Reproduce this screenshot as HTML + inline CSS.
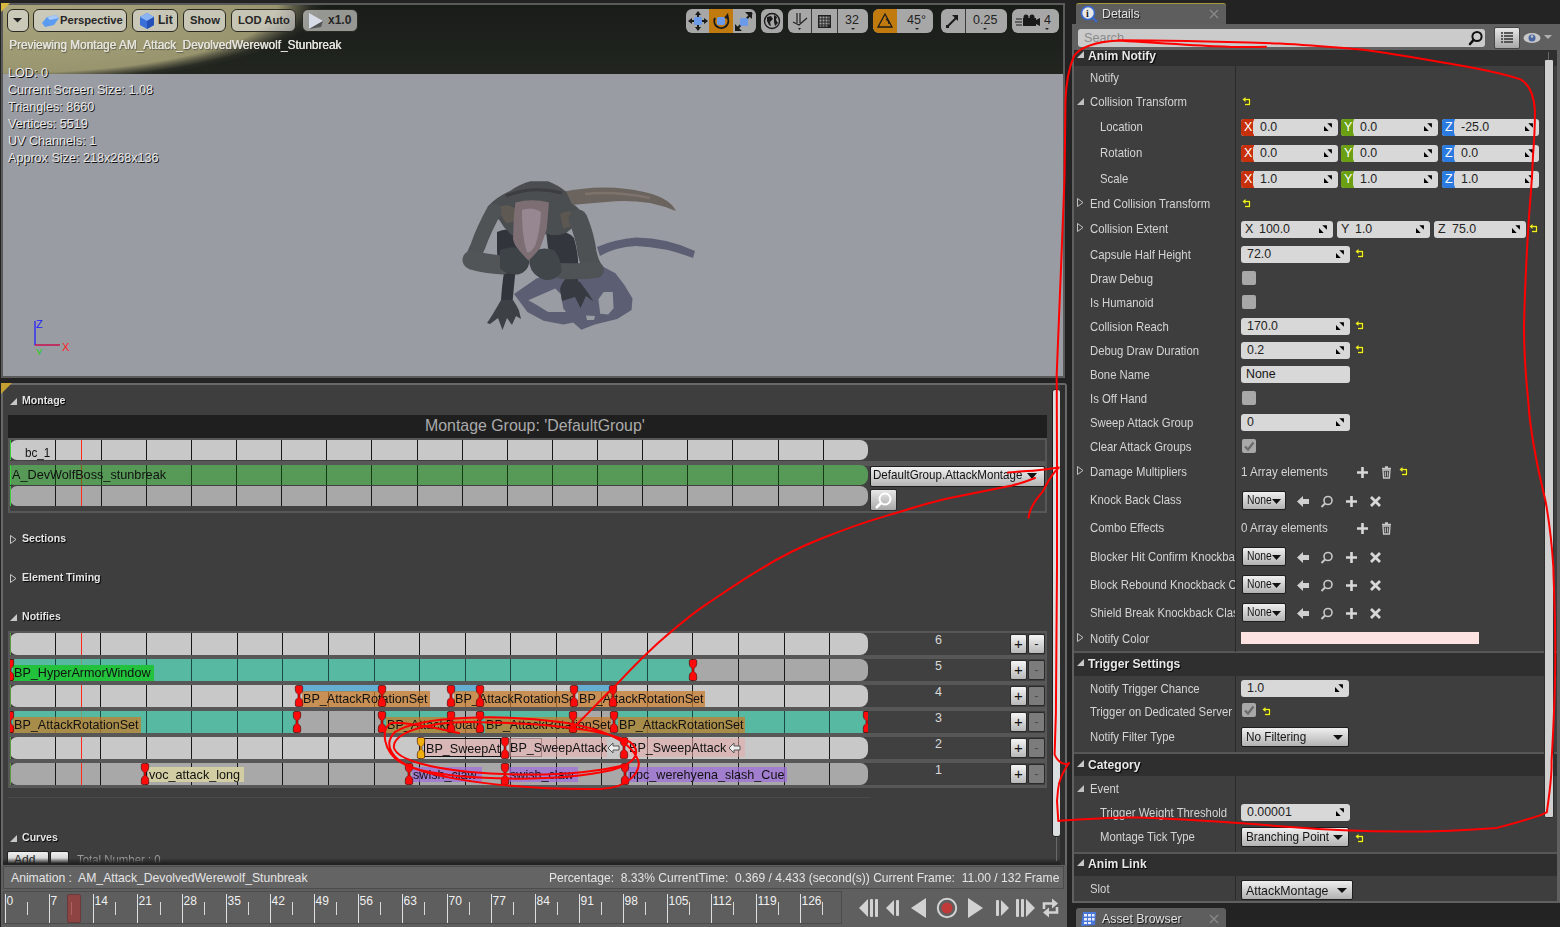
<!DOCTYPE html>
<html><head><meta charset="utf-8">
<style>
*{box-sizing:border-box;margin:0;padding:0}
html,body{width:1560px;height:927px;overflow:hidden;background:#232323;font-family:"Liberation Sans",sans-serif;position:relative}
.a{position:absolute}
/* viewport */
#vp{left:1px;top:3px;width:1064px;height:375px;background:#5a5a5a}
#vpin{left:2px;top:2px;width:1060px;height:371px;background:#9a9ca3;overflow:hidden}
#sky{left:0;top:0;width:1060px;height:69px;background:radial-gradient(ellipse 330px 82px at 0px 0px,#a8a47e 0%,#9c9872 70%,#98946e 83%,#5c5b47 88%,#2a2d25 93%,rgba(29,33,28,0) 97%),linear-gradient(#191c18,#1e221d 60%,#22261f)}
.tb{position:absolute;top:6px;height:23px;border:1px solid #2a2a22;border-radius:6px;background:rgba(226,226,222,.62);font-weight:bold;font-size:12px;color:#262626;line-height:21px;white-space:nowrap}
.ovt{position:absolute;color:#e8e8e8;font-size:12px;text-shadow:1px 1px 0 #111;white-space:nowrap}
/* montage panel */
#mp{left:1px;top:383px;width:1066px;height:483px;background:#5a5a5a}
#mpin{left:2px;top:2px;width:1062px;height:481px;background:#3e3e3e;overflow:hidden}
.sec{position:absolute;color:#e0e0e0;font-size:11.5px;font-weight:bold;text-shadow:1px 1px 0 #111;white-space:nowrap}
/* details */
#dt{left:1072px;top:24px;width:488px;height:878px;background:#5c5c5c}
</style></head><body>
<div class="a" id="vp"><div class="a" id="vpin">
  <div class="a" id="sky"></div>
  <!-- toolbar left (coords relative to vpin: x-3, y-5) -->
  <div class="tb" style="left:4px;top:4px;width:22px"><svg width="20" height="21" style="position:absolute;left:0;top:0"><path d="M5 8 L14 8 L9.5 12.5 Z" fill="#222"/></svg></div>
  <div class="tb" style="left:30px;top:4px;width:94px"><svg width="20" height="16" style="position:absolute;left:7px;top:3px"><path d="M1 10 L6 4 L15 2 L18 5 L13 12 L4 14 Z" fill="#5b9cf0"/><path d="M6 4 L15 2 L18 5 L9 7 Z" fill="#a8c8f8"/></svg><span style="position:absolute;left:26px;top:0;font-size:11.2px">Perspective</span></div>
  <div class="tb" style="left:129px;top:4px;width:46px"><svg width="18" height="18" style="position:absolute;left:5px;top:2px"><path d="M2 5 L9 1 L16 5 L16 13 L9 17 L2 13 Z" fill="#3a6ed8"/><path d="M2 5 L9 1 L16 5 L9 9 Z" fill="#8ab4f4"/><path d="M9 9 L16 5 L16 13 L9 17 Z" fill="#2550b8"/></svg><span style="position:absolute;left:25px;top:0;font-size:12px">Lit</span></div>
  <div class="tb" style="left:180px;top:4px;width:43px"><span style="position:absolute;left:6px;top:0;font-size:11.2px">Show</span></div>
  <div class="tb" style="left:228px;top:4px;width:65px"><span style="position:absolute;left:6px;top:0;font-size:11.2px">LOD Auto</span></div>
  <div class="tb" style="left:299px;top:4px;width:56px"><svg width="18" height="18" style="position:absolute;left:4px;top:2px"><path d="M2 1 L16 9 L2 17 Z" fill="#d8dce8"/><path d="M2 17 L16 9 L14 15 Z" fill="#555"/></svg><span style="position:absolute;left:25px;top:0;font-size:12px">x1.0</span></div>
  <div class="ovt" style="left:6px;top:33px;font-size:12.2px;color:#e4e4dc;text-shadow:0.4px 0 0 #e4e4dc,1px 1px 1px rgba(40,40,40,.6);transform:scaleX(.97);transform-origin:0 0">Previewing Montage AM_Attack_DevolvedWerewolf_Stunbreak</div>
  <div class="ovt" style="left:5px;top:60px;font-size:12.6px;line-height:17px">LOD: 0<br>Current Screen Size: 1.08<br>Triangles: 8660<br>Vertices: 5519<br>UV Channels: 1<br>Approx Size: 218x268x136</div>
  <div class="a" style="left:683px;top:4px;width:70px;height:24px;border-radius:6px;background:#a7a7a7;overflow:hidden">
    <div class="a" style="left:23px;top:0;width:24px;height:24px;background:#c07a0e"></div>
    <svg class="a" style="left:0;top:0" width="70" height="24"><g fill="#1a1a1a"><path d="M12 2 L15 6 L9 6 Z M12 22 L15 18 L9 18 Z M2 12 L6 9 L6 15 Z M22 12 L18 9 L18 15 Z"/><rect x="11" y="5" width="2" height="14"/><rect x="5" y="11" width="14" height="2"/></g><rect x="8" y="8" width="8" height="8" rx="1.5" fill="#6a9ae8"/><path d="M29 9 A7 7 0 1 0 41 8" stroke="#1a1a1a" stroke-width="2" fill="none"/><path d="M42 4 L43 10 L38 9 Z" fill="#1a1a1a"/><rect x="31" y="8" width="8" height="8" rx="1.5" fill="#6a9ae8"/><path d="M50 21 L66 4" stroke="#1a1a1a" stroke-width="2"/><path d="M66 3 L66 10 L59 3 Z M49 22 L49 15 L56 22 Z" fill="#1a1a1a"/><rect x="54" y="9" width="8" height="8" rx="1.5" fill="#6a9ae8"/></svg>
  </div>
  <div class="a" style="left:758px;top:4px;width:22px;height:24px;border-radius:6px;background:#a7a7a7"><svg width="22" height="24"><circle cx="11" cy="12" r="7.5" stroke="#1a1a1a" stroke-width="1.4" fill="none"/><path d="M6 8 L10 7 L12 10 L9 13 L10 17 L8 16 L6 12 Z M13 6 L16 8 L15 11 L17 14 L14 17 L13 13 Z" fill="#1a1a1a"/></svg></div>
  <div class="a" style="left:785px;top:4px;width:80px;height:24px;border-radius:6px;background:#a7a7a7;overflow:hidden">
    <div class="a" style="left:23px;top:0;width:1px;height:24px;background:#3a3a3a"></div><div class="a" style="left:49px;top:0;width:1px;height:24px;background:#3a3a3a"></div>
    <svg class="a" style="left:0;top:0" width="80" height="24"><path d="M5 13 L11 16 L19 9 M9 4 L9 14 M12 4 L12 14" stroke="#222" stroke-width="1.2" fill="none"/><path d="M10 19 L13 19 L11.5 21 Z" fill="#222"/><g fill="#222"><rect x="30" y="6" width="13" height="13"/></g><g fill="#a7a7a7"><rect x="31.5" y="7.5" width="2" height="2"/><rect x="34.5" y="7.5" width="2" height="2"/><rect x="37.5" y="7.5" width="2" height="2"/><rect x="40.5" y="7.5" width="1" height="2"/><rect x="31.5" y="10.5" width="2" height="2"/><rect x="34.5" y="10.5" width="2" height="2"/><rect x="37.5" y="10.5" width="2" height="2"/><rect x="31.5" y="13.5" width="2" height="2"/><rect x="34.5" y="13.5" width="2" height="2"/><rect x="37.5" y="13.5" width="2" height="2"/><rect x="40.5" y="10.5" width="1" height="2"/><rect x="40.5" y="13.5" width="1" height="2"/><rect x="31.5" y="16.5" width="2" height="1"/><rect x="34.5" y="16.5" width="2" height="1"/><rect x="37.5" y="16.5" width="2" height="1"/></g><text x="57" y="15" font-size="12.5" font-family="Liberation Sans" fill="#222">32</text><path d="M63 19 L67 19 L65 21 Z" fill="#222"/></svg>
  </div>
  <div class="a" style="left:870px;top:4px;width:60px;height:24px;border-radius:6px;background:#a7a7a7;overflow:hidden">
    <div class="a" style="left:0;top:0;width:24px;height:24px;background:#c07a0e"></div>
    <svg class="a" style="left:0;top:0" width="60" height="24"><path d="M5 18 L12 5 L19 18 Z" stroke="#1a1a1a" stroke-width="1.3" fill="none"/><path d="M13 10 A6 6 0 0 1 16 15" stroke="#1a1a1a" stroke-width="1.2" fill="none"/><text x="34" y="15" font-size="12.5" font-family="Liberation Sans" fill="#222">45°</text><path d="M42 19 L46 19 L44 21 Z" fill="#222"/></svg>
  </div>
  <div class="a" style="left:938px;top:4px;width:66px;height:24px;border-radius:6px;background:#a7a7a7;overflow:hidden">
    <div class="a" style="left:24px;top:0;width:1px;height:24px;background:#3a3a3a"></div>
    <svg class="a" style="left:0;top:0" width="66" height="24"><path d="M7 17 L16 8" stroke="#1a1a1a" stroke-width="2"/><path d="M17 6 L17 12 L11 6 Z" fill="#1a1a1a"/><rect x="5" y="16" width="3" height="3" fill="#1a1a1a"/><text x="32" y="15" font-size="12.5" font-family="Liberation Sans" fill="#222">0.25</text><path d="M42 19 L46 19 L44 21 Z" fill="#222"/></svg>
  </div>
  <div class="a" style="left:1009px;top:4px;width:47px;height:24px;border-radius:6px;background:#a7a7a7"><svg width="47" height="24"><path d="M11 9 L24 9 L24 17 L11 17 Z M24 11 L28 9 L28 17 L24 15 Z" fill="#1a1a1a"/><path d="M4 10 L10 10 M3 13 L10 13 M4 16 L10 16" stroke="#1a1a1a" stroke-width="1"/><circle cx="14" cy="8" r="2.5" fill="#1a1a1a"/><circle cx="20" cy="8" r="2.5" fill="#1a1a1a"/><text x="32" y="15" font-size="12.5" font-family="Liberation Sans" fill="#222">4</text><path d="M33 19 L37 19 L35 21 Z" fill="#222"/></svg></div>
  <svg class="a" style="left:-3px;top:-5px" width="1060" height="371" viewBox="0 0 1060 371">
  <defs><filter id="bl" x="-5%" y="-5%" width="110%" height="110%"><feGaussianBlur stdDeviation="0.7"/></filter></defs>
  <g fill="#5b5f73" filter="url(#bl)">
    <path d="M597 247 Q615 239 636 237.5 Q668 238 695 251 L693 258 Q665 247 636 246 Q615 247 600 256 Z"/>
    <path fill-rule="evenodd" d="M514 294 L536.4 278.6 Q570 270 603.7 267 L615.4 273.3 L624.4 285 L632.5 298.4 L631.6 310 L617.2 319 L594.8 324.4 L581.3 329.8 L573.2 322.6 L563.3 324.4 L543.6 320.8 L527.4 311.9 Z M528.3 300.2 L555.3 288.5 L560.7 293.9 L563.3 308.3 L566 311.9 L548.1 311.9 L536.4 304.7 Z M598.4 299.3 L603.7 292.1 L612.7 292.1 L613.6 308.3 L608.2 314.6 L600.2 313.7 Z M586 315.5 L595 316 L594 320 L587 320 Z"/>
  </g>
  <!-- tail -->
  <path d="M562 192 Q590 186 615 187.8 Q645 190 662 198 Q672 203 676 211 Q664 206 650 203 Q630 200 615 201.3 Q595 203 571.5 205 Z" fill="#6b635d"/>
  <path d="M585 194 Q615 191 650 198" stroke="#857b73" stroke-width="2.5" fill="none" opacity=".7"/>
  <!-- thighs / legs -->
  <path d="M497 232 Q508 226 520 234 L521 262 Q516 270 515 276 L512.7 300 L501 300 Q502 285 503.7 274 Q497 262 497 250 Z" fill="#31353b"/>
  <path d="M546 231 Q565 228 574 238 Q579 255 578 270 L578 282 Q570 281 566.5 278 Q555 262 548 248 Z" fill="#33373d"/>
  <path d="M487 323 Q492 316 501 300 L513 300 Q517 306 519 310.5 L521 319 L516 316 L512 325 L507 318 L502.5 330 L498 318 L490 324 Z" fill="#3d4145"/>
  <path d="M560 288.7 Q562 282 566.5 278 L580 282 Q588 292 593.5 301.5 L586 296 L580.5 308 L575 297 L562 301 Z" fill="#373b41"/>
  <!-- torso -->
  <path d="M487.4 207 Q496 197 510 191 Q520 184 530.5 181.3 L547.8 181.3 Q558 185 566 191.6 Q569 198 571.5 203.4 Q579 207 583.4 215.3 Q576 226 566 233 Q556 237 547.8 234 L514 237 Q504 229 500 221 Q494 214 487.4 207 Z" fill="#4b4e51"/>
  <path d="M506 196 Q532 185 562 193" stroke="#3b3d41" stroke-width="3" fill="none"/>
  <path d="M497 208 Q510 201 518 212 Q516 224 506 223 Z" fill="#5f5953"/>
  <path d="M560 214 Q572 208 580 217 Q573 229 563 228 Z" fill="#5d5751"/>
  <!-- arms -->
  <path d="M494 211 Q484 229 478 246 Q474 254 473 259" stroke="#4f5355" stroke-width="15" fill="none" stroke-linecap="round"/>
  <path d="M472 260 Q486 264 503 265" stroke="#515557" stroke-width="19" fill="none" stroke-linecap="round"/>
  <path d="M578 219 Q585 236 587 252 Q589 262 592 267" stroke="#4d5153" stroke-width="19" fill="none" stroke-linecap="round"/>
  <path d="M596 270 Q582 272 562 271" stroke="#4f5355" stroke-width="16" fill="none" stroke-linecap="round"/>
  <!-- hands -->
  <path d="M500 250 Q510 246 522 248 Q530 252 529.4 262 Q528 272 518 274.6 Q505 275 500 268 Z" fill="#3e4347"/>
  <path d="M530 252 Q542 246 554 250 Q562 260 561.4 272 Q556 281 545 280 Q532 276 529.4 264 Z" fill="#41464b"/>
  <!-- snout -->
  <path d="M515.4 202.4 Q532 198 548.9 202.4 Q548 215 546.7 229.3 Q544 238 540.2 247.7 Q534 256 528.4 260.6 Q520 252 515.4 245.5 Q512 238 513.3 236.9 Q513 218 515.4 202.4 Z" fill="#7d6e74"/>
  <path d="M522 210 Q532 206 541 212 Q540 232 535 246 Q530 254 527 252 Q522 238 522 210 Z" fill="#968790"/>
</svg>
  <!-- axis -->
  <svg class="a" style="left:25px;top:310px" width="50" height="40"><path d="M7 6 L7 30 L32 30" stroke="#1a1aff" stroke-width="1.2" fill="none"/><path d="M7 30 L32 30" stroke="#ff1a1a" stroke-width="1.2"/><text x="8" y="13" fill="#2222ff" font-size="11" font-family="Liberation Sans">Z</text><text x="34" y="36" fill="#ff2020" font-size="11" font-family="Liberation Sans">X</text><text x="8" y="42" fill="#22cc22" font-size="10" font-family="Liberation Sans">Y</text></svg>
</div></div>

<div class="a" style="left:1px;top:383px;width:1066px;height:482px;background:#686868;border-radius:3px 3px 0 0"></div>
<div class="a" style="left:3px;top:385px;width:1062px;height:480px;background:#3e3e3e"></div>
<svg class="a" style="left:1px;top:383px" width="12" height="12"><path d="M0 0 L11 0 L0 11 Z" fill="#c4a032"/></svg>
<svg class="a" style="left:1px;top:3px" width="12" height="12"><path d="M0 0 L9 0 L0 9 Z" fill="#d8b840"/></svg>
<svg class="a" style="left:9px;top:397px" width="10" height="10"><path d="M1 8 L8 8 L8 1 Z" fill="#c8c8c8"/></svg><div class="a" style="left:22px;top:394px;white-space:nowrap;font-size:11.5px;font-weight:bold;color:#e4e4e4;text-shadow:1px 1px 1px #000;transform:scaleX(.92);transform-origin:0 0">Montage</div>
<svg class="a" style="left:9px;top:534px" width="10" height="12"><path d="M1.5 1.5 L7 5.5 L1.5 9.5 Z" stroke="#c8c8c8" stroke-width="1" fill="none"/></svg><div class="a" style="left:22px;top:532px;white-space:nowrap;font-size:11.5px;font-weight:bold;color:#e4e4e4;text-shadow:1px 1px 1px #000;transform:scaleX(.92);transform-origin:0 0">Sections</div>
<svg class="a" style="left:9px;top:573px" width="10" height="12"><path d="M1.5 1.5 L7 5.5 L1.5 9.5 Z" stroke="#c8c8c8" stroke-width="1" fill="none"/></svg><div class="a" style="left:22px;top:571px;white-space:nowrap;font-size:11.5px;font-weight:bold;color:#e4e4e4;text-shadow:1px 1px 1px #000;transform:scaleX(.92);transform-origin:0 0">Element Timing</div>
<svg class="a" style="left:9px;top:613px" width="10" height="10"><path d="M1 8 L8 8 L8 1 Z" fill="#c8c8c8"/></svg><div class="a" style="left:22px;top:610px;white-space:nowrap;font-size:11.5px;font-weight:bold;color:#e4e4e4;text-shadow:1px 1px 1px #000;transform:scaleX(.92);transform-origin:0 0">Notifies</div>
<svg class="a" style="left:9px;top:834px" width="10" height="10"><path d="M1 8 L8 8 L8 1 Z" fill="#c8c8c8"/></svg><div class="a" style="left:22px;top:831px;white-space:nowrap;font-size:11.5px;font-weight:bold;color:#e4e4e4;text-shadow:1px 1px 1px #000;transform:scaleX(.92);transform-origin:0 0">Curves</div>
<div class="a" style="left:8px;top:415px;width:1039px;height:23px;background:#1f1f1f"></div>
<div class="a" style="left:425px;top:416px;white-space:nowrap;font-size:15.9px;color:#ababab;line-height:20px">Montage Group: 'DefaultGroup'</div>
<div class="a" style="left:8px;top:438px;width:1039px;height:75px;background:#575757"></div>
<div class="a" style="left:10px;top:440px;width:1035px;height:21px;background:#404040"></div>
<div class="a" style="left:10px;top:466px;width:1035px;height:45px;background:#404040"></div>
<div class="a" style="left:10px;top:440px;width:858px;height:20px;background:#c8c8c8;border-radius:7px 8px 8px 7px"></div><div class="a" style="left:55.0px;top:440px;width:1px;height:20px;background:#181818"></div><div class="a" style="left:101.0px;top:440px;width:1px;height:20px;background:#181818"></div><div class="a" style="left:146.0px;top:440px;width:1px;height:20px;background:#181818"></div><div class="a" style="left:191.0px;top:440px;width:1px;height:20px;background:#181818"></div><div class="a" style="left:236.0px;top:440px;width:1px;height:20px;background:#181818"></div><div class="a" style="left:281.0px;top:440px;width:1px;height:20px;background:#181818"></div><div class="a" style="left:326.0px;top:440px;width:1px;height:20px;background:#181818"></div><div class="a" style="left:371.0px;top:440px;width:1px;height:20px;background:#181818"></div><div class="a" style="left:417.0px;top:440px;width:1px;height:20px;background:#181818"></div><div class="a" style="left:462.0px;top:440px;width:1px;height:20px;background:#181818"></div><div class="a" style="left:507.0px;top:440px;width:1px;height:20px;background:#181818"></div><div class="a" style="left:552.0px;top:440px;width:1px;height:20px;background:#181818"></div><div class="a" style="left:597.0px;top:440px;width:1px;height:20px;background:#181818"></div><div class="a" style="left:642.0px;top:440px;width:1px;height:20px;background:#181818"></div><div class="a" style="left:687.0px;top:440px;width:1px;height:20px;background:#181818"></div><div class="a" style="left:732.0px;top:440px;width:1px;height:20px;background:#181818"></div><div class="a" style="left:778.0px;top:440px;width:1px;height:20px;background:#181818"></div><div class="a" style="left:823.0px;top:440px;width:1px;height:20px;background:#181818"></div><div class="a" style="left:81px;top:440px;width:1.3px;height:20px;background:#ff2a1a"></div>
<div class="a" style="left:10px;top:465px;width:858px;height:20px;background:#579957;border-radius:4px 8px 8px 4px"></div><div class="a" style="left:55.0px;top:465px;width:1px;height:20px;background:#143a14"></div><div class="a" style="left:101.0px;top:465px;width:1px;height:20px;background:#143a14"></div><div class="a" style="left:146.0px;top:465px;width:1px;height:20px;background:#143a14"></div><div class="a" style="left:191.0px;top:465px;width:1px;height:20px;background:#143a14"></div><div class="a" style="left:236.0px;top:465px;width:1px;height:20px;background:#143a14"></div><div class="a" style="left:281.0px;top:465px;width:1px;height:20px;background:#143a14"></div><div class="a" style="left:326.0px;top:465px;width:1px;height:20px;background:#143a14"></div><div class="a" style="left:371.0px;top:465px;width:1px;height:20px;background:#143a14"></div><div class="a" style="left:417.0px;top:465px;width:1px;height:20px;background:#143a14"></div><div class="a" style="left:462.0px;top:465px;width:1px;height:20px;background:#143a14"></div><div class="a" style="left:507.0px;top:465px;width:1px;height:20px;background:#143a14"></div><div class="a" style="left:552.0px;top:465px;width:1px;height:20px;background:#143a14"></div><div class="a" style="left:597.0px;top:465px;width:1px;height:20px;background:#143a14"></div><div class="a" style="left:642.0px;top:465px;width:1px;height:20px;background:#143a14"></div><div class="a" style="left:687.0px;top:465px;width:1px;height:20px;background:#143a14"></div><div class="a" style="left:732.0px;top:465px;width:1px;height:20px;background:#143a14"></div><div class="a" style="left:778.0px;top:465px;width:1px;height:20px;background:#143a14"></div><div class="a" style="left:823.0px;top:465px;width:1px;height:20px;background:#143a14"></div><div class="a" style="left:81px;top:465px;width:1.3px;height:20px;background:#8a5a1a"></div>
<div class="a" style="left:10px;top:486px;width:858px;height:20px;background:#a8a8a8;border-radius:7px 8px 8px 7px"></div><div class="a" style="left:55.0px;top:486px;width:1px;height:20px;background:#181818"></div><div class="a" style="left:101.0px;top:486px;width:1px;height:20px;background:#181818"></div><div class="a" style="left:146.0px;top:486px;width:1px;height:20px;background:#181818"></div><div class="a" style="left:191.0px;top:486px;width:1px;height:20px;background:#181818"></div><div class="a" style="left:236.0px;top:486px;width:1px;height:20px;background:#181818"></div><div class="a" style="left:281.0px;top:486px;width:1px;height:20px;background:#181818"></div><div class="a" style="left:326.0px;top:486px;width:1px;height:20px;background:#181818"></div><div class="a" style="left:371.0px;top:486px;width:1px;height:20px;background:#181818"></div><div class="a" style="left:417.0px;top:486px;width:1px;height:20px;background:#181818"></div><div class="a" style="left:462.0px;top:486px;width:1px;height:20px;background:#181818"></div><div class="a" style="left:507.0px;top:486px;width:1px;height:20px;background:#181818"></div><div class="a" style="left:552.0px;top:486px;width:1px;height:20px;background:#181818"></div><div class="a" style="left:597.0px;top:486px;width:1px;height:20px;background:#181818"></div><div class="a" style="left:642.0px;top:486px;width:1px;height:20px;background:#181818"></div><div class="a" style="left:687.0px;top:486px;width:1px;height:20px;background:#181818"></div><div class="a" style="left:732.0px;top:486px;width:1px;height:20px;background:#181818"></div><div class="a" style="left:778.0px;top:486px;width:1px;height:20px;background:#181818"></div><div class="a" style="left:823.0px;top:486px;width:1px;height:20px;background:#181818"></div><div class="a" style="left:81px;top:486px;width:1.3px;height:20px;background:#ff2a1a"></div>
<div class="a" style="left:10px;top:440px;width:1.2px;height:20px;background:#3ad23a"></div>
<div class="a" style="left:10px;top:465px;width:1.2px;height:20px;background:#3ad23a"></div>
<div class="a" style="left:10px;top:486px;width:1.2px;height:20px;background:#3ad23a"></div>
<div class="a" style="left:25px;top:445px;white-space:nowrap;font-size:13px;color:#111;line-height:15px;transform:scaleX(.9);transform-origin:0 0">bc_1</div>
<div class="a" style="left:12px;top:467px;white-space:nowrap;font-size:13px;color:#111;line-height:15px;transform:scaleX(.975);transform-origin:0 0">A_DevWolfBoss_stunbreak</div>
<div class="a" style="left:870px;top:466px;width:175px;height:21px;background:linear-gradient(#f2f2f2,#b4b4b4);border:1px solid #1e1e1e;border-radius:2px"></div>
<div class="a" style="left:873px;top:468px;white-space:nowrap;font-size:12.6px;color:#111;line-height:15px;transform:scaleX(.92);transform-origin:0 0;width:165px;overflow:hidden">DefaultGroup.AttackMontage</div>
<svg class="a" style="left:1025px;top:471px" width="14" height="10"><path d="M2 2 L12 2 L7 8 Z" fill="#111"/></svg>
<div class="a" style="left:870px;top:489px;width:27px;height:22px;background:linear-gradient(#e8e8e8,#a8a8a8);border:1px solid #2a2a2a;border-radius:2px"><svg width="25" height="20"><circle cx="14" cy="9" r="5.5" stroke="#fff" stroke-width="2" fill="none"/><path d="M10 13 L5 18" stroke="#fff" stroke-width="2.5"/></svg></div>
<div class="a" style="left:8px;top:631px;width:1039px;height:157px;background:#575757"></div>
<div class="a" style="left:10px;top:633px;width:1035px;height:22px;background:#404040"></div>
<div class="a" style="left:10px;top:633px;width:858px;height:22px;background:#c8c8c8;border-radius:7px 8px 8px 7px"></div><div class="a" style="left:55.0px;top:633px;width:1px;height:22px;background:#181818"></div><div class="a" style="left:100.0px;top:633px;width:1px;height:22px;background:#181818"></div><div class="a" style="left:146.0px;top:633px;width:1px;height:22px;background:#181818"></div><div class="a" style="left:191.0px;top:633px;width:1px;height:22px;background:#181818"></div><div class="a" style="left:237.0px;top:633px;width:1px;height:22px;background:#181818"></div><div class="a" style="left:282.0px;top:633px;width:1px;height:22px;background:#181818"></div><div class="a" style="left:328.0px;top:633px;width:1px;height:22px;background:#181818"></div><div class="a" style="left:374.0px;top:633px;width:1px;height:22px;background:#181818"></div><div class="a" style="left:419.0px;top:633px;width:1px;height:22px;background:#181818"></div><div class="a" style="left:465.0px;top:633px;width:1px;height:22px;background:#181818"></div><div class="a" style="left:510.0px;top:633px;width:1px;height:22px;background:#181818"></div><div class="a" style="left:556.0px;top:633px;width:1px;height:22px;background:#181818"></div><div class="a" style="left:601.0px;top:633px;width:1px;height:22px;background:#181818"></div><div class="a" style="left:647.0px;top:633px;width:1px;height:22px;background:#181818"></div><div class="a" style="left:692.0px;top:633px;width:1px;height:22px;background:#181818"></div><div class="a" style="left:738.0px;top:633px;width:1px;height:22px;background:#181818"></div><div class="a" style="left:784.0px;top:633px;width:1px;height:22px;background:#181818"></div><div class="a" style="left:829.0px;top:633px;width:1px;height:22px;background:#181818"></div><div class="a" style="left:81px;top:633px;width:1.3px;height:22px;background:#ff2a1a"></div>
<div class="a" style="left:10px;top:633px;width:1.2px;height:22px;background:#5a9a3a"></div>
<div class="a" style="left:935px;top:633px;white-space:nowrap;font-size:12.5px;color:#d8d8d8;line-height:14px">6</div>
<div class="a" style="left:1010px;top:634px;width:17px;height:20px;background:linear-gradient(#f4f4f4,#b8b8b8);border:1px solid #2a2a2a;border-radius:2px"><div style="position:absolute;left:0;top:0;width:15px;text-align:center;font-size:15px;line-height:17px;color:#111">+</div></div>
<div class="a" style="left:1028px;top:634px;width:17px;height:20px;background:linear-gradient(#f4f4f4,#b8b8b8);border:1px solid #2a2a2a;border-radius:2px"><div style="position:absolute;left:0;top:0;width:15px;text-align:center;font-size:13px;line-height:17px;color:#222">-</div></div>
<div class="a" style="left:10px;top:659px;width:1035px;height:22px;background:#404040"></div>
<div class="a" style="left:10px;top:659px;width:858px;height:22px;background:#a8a8a8;border-radius:7px 8px 8px 7px"></div><div class="a" style="left:55.0px;top:659px;width:1px;height:22px;background:#181818"></div><div class="a" style="left:100.0px;top:659px;width:1px;height:22px;background:#181818"></div><div class="a" style="left:146.0px;top:659px;width:1px;height:22px;background:#181818"></div><div class="a" style="left:191.0px;top:659px;width:1px;height:22px;background:#181818"></div><div class="a" style="left:237.0px;top:659px;width:1px;height:22px;background:#181818"></div><div class="a" style="left:282.0px;top:659px;width:1px;height:22px;background:#181818"></div><div class="a" style="left:328.0px;top:659px;width:1px;height:22px;background:#181818"></div><div class="a" style="left:374.0px;top:659px;width:1px;height:22px;background:#181818"></div><div class="a" style="left:419.0px;top:659px;width:1px;height:22px;background:#181818"></div><div class="a" style="left:465.0px;top:659px;width:1px;height:22px;background:#181818"></div><div class="a" style="left:510.0px;top:659px;width:1px;height:22px;background:#181818"></div><div class="a" style="left:556.0px;top:659px;width:1px;height:22px;background:#181818"></div><div class="a" style="left:601.0px;top:659px;width:1px;height:22px;background:#181818"></div><div class="a" style="left:647.0px;top:659px;width:1px;height:22px;background:#181818"></div><div class="a" style="left:692.0px;top:659px;width:1px;height:22px;background:#181818"></div><div class="a" style="left:738.0px;top:659px;width:1px;height:22px;background:#181818"></div><div class="a" style="left:784.0px;top:659px;width:1px;height:22px;background:#181818"></div><div class="a" style="left:829.0px;top:659px;width:1px;height:22px;background:#181818"></div><div class="a" style="left:81px;top:659px;width:1.3px;height:22px;background:#ff2a1a"></div>
<div class="a" style="left:10px;top:659px;width:1.2px;height:22px;background:#5a9a3a"></div>
<div class="a" style="left:935px;top:659px;white-space:nowrap;font-size:12.5px;color:#d8d8d8;line-height:14px">5</div>
<div class="a" style="left:1010px;top:660px;width:17px;height:20px;background:linear-gradient(#f4f4f4,#b8b8b8);border:1px solid #2a2a2a;border-radius:2px"><div style="position:absolute;left:0;top:0;width:15px;text-align:center;font-size:15px;line-height:17px;color:#111">+</div></div>
<div class="a" style="left:1028px;top:660px;width:17px;height:20px;background:#7c7c7c;border:1px solid #2a2a2a;border-radius:2px"><div style="position:absolute;left:0;top:0;width:15px;text-align:center;font-size:13px;line-height:17px;color:#4a4a4a">-</div></div>
<div class="a" style="left:10px;top:685px;width:1035px;height:22px;background:#404040"></div>
<div class="a" style="left:10px;top:685px;width:858px;height:22px;background:#c8c8c8;border-radius:7px 8px 8px 7px"></div><div class="a" style="left:55.0px;top:685px;width:1px;height:22px;background:#181818"></div><div class="a" style="left:100.0px;top:685px;width:1px;height:22px;background:#181818"></div><div class="a" style="left:146.0px;top:685px;width:1px;height:22px;background:#181818"></div><div class="a" style="left:191.0px;top:685px;width:1px;height:22px;background:#181818"></div><div class="a" style="left:237.0px;top:685px;width:1px;height:22px;background:#181818"></div><div class="a" style="left:282.0px;top:685px;width:1px;height:22px;background:#181818"></div><div class="a" style="left:328.0px;top:685px;width:1px;height:22px;background:#181818"></div><div class="a" style="left:374.0px;top:685px;width:1px;height:22px;background:#181818"></div><div class="a" style="left:419.0px;top:685px;width:1px;height:22px;background:#181818"></div><div class="a" style="left:465.0px;top:685px;width:1px;height:22px;background:#181818"></div><div class="a" style="left:510.0px;top:685px;width:1px;height:22px;background:#181818"></div><div class="a" style="left:556.0px;top:685px;width:1px;height:22px;background:#181818"></div><div class="a" style="left:601.0px;top:685px;width:1px;height:22px;background:#181818"></div><div class="a" style="left:647.0px;top:685px;width:1px;height:22px;background:#181818"></div><div class="a" style="left:692.0px;top:685px;width:1px;height:22px;background:#181818"></div><div class="a" style="left:738.0px;top:685px;width:1px;height:22px;background:#181818"></div><div class="a" style="left:784.0px;top:685px;width:1px;height:22px;background:#181818"></div><div class="a" style="left:829.0px;top:685px;width:1px;height:22px;background:#181818"></div><div class="a" style="left:81px;top:685px;width:1.3px;height:22px;background:#ff2a1a"></div>
<div class="a" style="left:10px;top:685px;width:1.2px;height:22px;background:#5a9a3a"></div>
<div class="a" style="left:935px;top:685px;white-space:nowrap;font-size:12.5px;color:#d8d8d8;line-height:14px">4</div>
<div class="a" style="left:1010px;top:686px;width:17px;height:20px;background:linear-gradient(#f4f4f4,#b8b8b8);border:1px solid #2a2a2a;border-radius:2px"><div style="position:absolute;left:0;top:0;width:15px;text-align:center;font-size:15px;line-height:17px;color:#111">+</div></div>
<div class="a" style="left:1028px;top:686px;width:17px;height:20px;background:#7c7c7c;border:1px solid #2a2a2a;border-radius:2px"><div style="position:absolute;left:0;top:0;width:15px;text-align:center;font-size:13px;line-height:17px;color:#4a4a4a">-</div></div>
<div class="a" style="left:10px;top:711px;width:1035px;height:22px;background:#404040"></div>
<div class="a" style="left:10px;top:711px;width:858px;height:22px;background:#a8a8a8;border-radius:7px 8px 8px 7px"></div><div class="a" style="left:55.0px;top:711px;width:1px;height:22px;background:#181818"></div><div class="a" style="left:100.0px;top:711px;width:1px;height:22px;background:#181818"></div><div class="a" style="left:146.0px;top:711px;width:1px;height:22px;background:#181818"></div><div class="a" style="left:191.0px;top:711px;width:1px;height:22px;background:#181818"></div><div class="a" style="left:237.0px;top:711px;width:1px;height:22px;background:#181818"></div><div class="a" style="left:282.0px;top:711px;width:1px;height:22px;background:#181818"></div><div class="a" style="left:328.0px;top:711px;width:1px;height:22px;background:#181818"></div><div class="a" style="left:374.0px;top:711px;width:1px;height:22px;background:#181818"></div><div class="a" style="left:419.0px;top:711px;width:1px;height:22px;background:#181818"></div><div class="a" style="left:465.0px;top:711px;width:1px;height:22px;background:#181818"></div><div class="a" style="left:510.0px;top:711px;width:1px;height:22px;background:#181818"></div><div class="a" style="left:556.0px;top:711px;width:1px;height:22px;background:#181818"></div><div class="a" style="left:601.0px;top:711px;width:1px;height:22px;background:#181818"></div><div class="a" style="left:647.0px;top:711px;width:1px;height:22px;background:#181818"></div><div class="a" style="left:692.0px;top:711px;width:1px;height:22px;background:#181818"></div><div class="a" style="left:738.0px;top:711px;width:1px;height:22px;background:#181818"></div><div class="a" style="left:784.0px;top:711px;width:1px;height:22px;background:#181818"></div><div class="a" style="left:829.0px;top:711px;width:1px;height:22px;background:#181818"></div><div class="a" style="left:81px;top:711px;width:1.3px;height:22px;background:#ff2a1a"></div>
<div class="a" style="left:10px;top:711px;width:1.2px;height:22px;background:#5a9a3a"></div>
<div class="a" style="left:935px;top:711px;white-space:nowrap;font-size:12.5px;color:#d8d8d8;line-height:14px">3</div>
<div class="a" style="left:1010px;top:712px;width:17px;height:20px;background:linear-gradient(#f4f4f4,#b8b8b8);border:1px solid #2a2a2a;border-radius:2px"><div style="position:absolute;left:0;top:0;width:15px;text-align:center;font-size:15px;line-height:17px;color:#111">+</div></div>
<div class="a" style="left:1028px;top:712px;width:17px;height:20px;background:#7c7c7c;border:1px solid #2a2a2a;border-radius:2px"><div style="position:absolute;left:0;top:0;width:15px;text-align:center;font-size:13px;line-height:17px;color:#4a4a4a">-</div></div>
<div class="a" style="left:10px;top:737px;width:1035px;height:22px;background:#404040"></div>
<div class="a" style="left:10px;top:737px;width:858px;height:22px;background:#c8c8c8;border-radius:7px 8px 8px 7px"></div><div class="a" style="left:55.0px;top:737px;width:1px;height:22px;background:#181818"></div><div class="a" style="left:100.0px;top:737px;width:1px;height:22px;background:#181818"></div><div class="a" style="left:146.0px;top:737px;width:1px;height:22px;background:#181818"></div><div class="a" style="left:191.0px;top:737px;width:1px;height:22px;background:#181818"></div><div class="a" style="left:237.0px;top:737px;width:1px;height:22px;background:#181818"></div><div class="a" style="left:282.0px;top:737px;width:1px;height:22px;background:#181818"></div><div class="a" style="left:328.0px;top:737px;width:1px;height:22px;background:#181818"></div><div class="a" style="left:374.0px;top:737px;width:1px;height:22px;background:#181818"></div><div class="a" style="left:419.0px;top:737px;width:1px;height:22px;background:#181818"></div><div class="a" style="left:465.0px;top:737px;width:1px;height:22px;background:#181818"></div><div class="a" style="left:510.0px;top:737px;width:1px;height:22px;background:#181818"></div><div class="a" style="left:556.0px;top:737px;width:1px;height:22px;background:#181818"></div><div class="a" style="left:601.0px;top:737px;width:1px;height:22px;background:#181818"></div><div class="a" style="left:647.0px;top:737px;width:1px;height:22px;background:#181818"></div><div class="a" style="left:692.0px;top:737px;width:1px;height:22px;background:#181818"></div><div class="a" style="left:738.0px;top:737px;width:1px;height:22px;background:#181818"></div><div class="a" style="left:784.0px;top:737px;width:1px;height:22px;background:#181818"></div><div class="a" style="left:829.0px;top:737px;width:1px;height:22px;background:#181818"></div><div class="a" style="left:81px;top:737px;width:1.3px;height:22px;background:#ff2a1a"></div>
<div class="a" style="left:10px;top:737px;width:1.2px;height:22px;background:#5a9a3a"></div>
<div class="a" style="left:935px;top:737px;white-space:nowrap;font-size:12.5px;color:#d8d8d8;line-height:14px">2</div>
<div class="a" style="left:1010px;top:738px;width:17px;height:20px;background:linear-gradient(#f4f4f4,#b8b8b8);border:1px solid #2a2a2a;border-radius:2px"><div style="position:absolute;left:0;top:0;width:15px;text-align:center;font-size:15px;line-height:17px;color:#111">+</div></div>
<div class="a" style="left:1028px;top:738px;width:17px;height:20px;background:#7c7c7c;border:1px solid #2a2a2a;border-radius:2px"><div style="position:absolute;left:0;top:0;width:15px;text-align:center;font-size:13px;line-height:17px;color:#4a4a4a">-</div></div>
<div class="a" style="left:10px;top:763px;width:1035px;height:22px;background:#404040"></div>
<div class="a" style="left:10px;top:763px;width:858px;height:22px;background:#a8a8a8;border-radius:7px 8px 8px 7px"></div><div class="a" style="left:55.0px;top:763px;width:1px;height:22px;background:#181818"></div><div class="a" style="left:100.0px;top:763px;width:1px;height:22px;background:#181818"></div><div class="a" style="left:146.0px;top:763px;width:1px;height:22px;background:#181818"></div><div class="a" style="left:191.0px;top:763px;width:1px;height:22px;background:#181818"></div><div class="a" style="left:237.0px;top:763px;width:1px;height:22px;background:#181818"></div><div class="a" style="left:282.0px;top:763px;width:1px;height:22px;background:#181818"></div><div class="a" style="left:328.0px;top:763px;width:1px;height:22px;background:#181818"></div><div class="a" style="left:374.0px;top:763px;width:1px;height:22px;background:#181818"></div><div class="a" style="left:419.0px;top:763px;width:1px;height:22px;background:#181818"></div><div class="a" style="left:465.0px;top:763px;width:1px;height:22px;background:#181818"></div><div class="a" style="left:510.0px;top:763px;width:1px;height:22px;background:#181818"></div><div class="a" style="left:556.0px;top:763px;width:1px;height:22px;background:#181818"></div><div class="a" style="left:601.0px;top:763px;width:1px;height:22px;background:#181818"></div><div class="a" style="left:647.0px;top:763px;width:1px;height:22px;background:#181818"></div><div class="a" style="left:692.0px;top:763px;width:1px;height:22px;background:#181818"></div><div class="a" style="left:738.0px;top:763px;width:1px;height:22px;background:#181818"></div><div class="a" style="left:784.0px;top:763px;width:1px;height:22px;background:#181818"></div><div class="a" style="left:829.0px;top:763px;width:1px;height:22px;background:#181818"></div><div class="a" style="left:81px;top:763px;width:1.3px;height:22px;background:#ff2a1a"></div>
<div class="a" style="left:10px;top:763px;width:1.2px;height:22px;background:#5a9a3a"></div>
<div class="a" style="left:935px;top:763px;white-space:nowrap;font-size:12.5px;color:#d8d8d8;line-height:14px">1</div>
<div class="a" style="left:1010px;top:764px;width:17px;height:20px;background:linear-gradient(#f4f4f4,#b8b8b8);border:1px solid #2a2a2a;border-radius:2px"><div style="position:absolute;left:0;top:0;width:15px;text-align:center;font-size:15px;line-height:17px;color:#111">+</div></div>
<div class="a" style="left:1028px;top:764px;width:17px;height:20px;background:#7c7c7c;border:1px solid #2a2a2a;border-radius:2px"><div style="position:absolute;left:0;top:0;width:15px;text-align:center;font-size:13px;line-height:17px;color:#4a4a4a">-</div></div>
<div class="a" style="left:10px;top:659px;width:683px;height:22px;background:#57b9a2;border-radius:7px 0 0 7px"></div>
<div class="a" style="left:55.0px;top:659px;width:1px;height:22px;background:#1a4a40"></div><div class="a" style="left:100.0px;top:659px;width:1px;height:22px;background:#1a4a40"></div><div class="a" style="left:146.0px;top:659px;width:1px;height:22px;background:#1a4a40"></div><div class="a" style="left:191.0px;top:659px;width:1px;height:22px;background:#1a4a40"></div><div class="a" style="left:237.0px;top:659px;width:1px;height:22px;background:#1a4a40"></div><div class="a" style="left:282.0px;top:659px;width:1px;height:22px;background:#1a4a40"></div><div class="a" style="left:328.0px;top:659px;width:1px;height:22px;background:#1a4a40"></div><div class="a" style="left:374.0px;top:659px;width:1px;height:22px;background:#1a4a40"></div><div class="a" style="left:419.0px;top:659px;width:1px;height:22px;background:#1a4a40"></div><div class="a" style="left:465.0px;top:659px;width:1px;height:22px;background:#1a4a40"></div><div class="a" style="left:510.0px;top:659px;width:1px;height:22px;background:#1a4a40"></div><div class="a" style="left:556.0px;top:659px;width:1px;height:22px;background:#1a4a40"></div><div class="a" style="left:601.0px;top:659px;width:1px;height:22px;background:#1a4a40"></div><div class="a" style="left:647.0px;top:659px;width:1px;height:22px;background:#1a4a40"></div><div class="a" style="left:692.0px;top:659px;width:1px;height:22px;background:#1a4a40"></div>
<div class="a" style="left:81px;top:659px;width:1.3px;height:22px;background:#7a9a70"></div>
<div class="a" style="left:10px;top:711px;width:287px;height:22px;background:#57b9a2;border-radius:7px 0 0 7px"></div>
<div class="a" style="left:55.0px;top:711px;width:1px;height:22px;background:#1a4a40"></div><div class="a" style="left:100.0px;top:711px;width:1px;height:22px;background:#1a4a40"></div><div class="a" style="left:146.0px;top:711px;width:1px;height:22px;background:#1a4a40"></div><div class="a" style="left:191.0px;top:711px;width:1px;height:22px;background:#1a4a40"></div><div class="a" style="left:237.0px;top:711px;width:1px;height:22px;background:#1a4a40"></div><div class="a" style="left:282.0px;top:711px;width:1px;height:22px;background:#1a4a40"></div>
<div class="a" style="left:382px;top:711px;width:69px;height:22px;background:#57b9a2;"></div>
<div class="a" style="left:419.0px;top:711px;width:1px;height:22px;background:#1a4a40"></div>
<div class="a" style="left:480px;top:711px;width:93px;height:22px;background:#57b9a2;"></div>
<div class="a" style="left:510.0px;top:711px;width:1px;height:22px;background:#1a4a40"></div><div class="a" style="left:556.0px;top:711px;width:1px;height:22px;background:#1a4a40"></div>
<div class="a" style="left:614px;top:711px;width:254px;height:22px;background:#57b9a2;border-radius:0 8px 8px 0"></div>
<div class="a" style="left:647.0px;top:711px;width:1px;height:22px;background:#1a4a40"></div><div class="a" style="left:692.0px;top:711px;width:1px;height:22px;background:#1a4a40"></div><div class="a" style="left:738.0px;top:711px;width:1px;height:22px;background:#1a4a40"></div><div class="a" style="left:784.0px;top:711px;width:1px;height:22px;background:#1a4a40"></div><div class="a" style="left:829.0px;top:711px;width:1px;height:22px;background:#1a4a40"></div>
<div class="a" style="left:81px;top:711px;width:1.3px;height:22px;background:#7a9a70"></div>
<div class="a" style="left:299px;top:685px;width:83px;height:7px;background:#64aed2"></div>
<div class="a" style="left:451px;top:685px;width:29px;height:7px;background:#64aed2"></div>
<div class="a" style="left:574px;top:685px;width:39px;height:7px;background:#64aed2"></div>
<div class="a" style="left:13px;top:665px;width:141px;height:16px;background:#22c23c;overflow:hidden;white-space:nowrap;"><span style="position:absolute;left:1px;top:0.0px;font-size:13.2px;line-height:15px;color:#111;transform:scaleX(.955);transform-origin:0 0">BP_HyperArmorWindow</span></div>
<div class="a" style="left:302px;top:691px;width:128px;height:16px;background:rgba(200,122,40,.72);overflow:hidden;white-space:nowrap;"><span style="position:absolute;left:1px;top:0.0px;font-size:13.2px;line-height:15px;color:#111;transform:scaleX(.955);transform-origin:0 0">BP_AttackRotationSet</span></div>
<div class="a" style="left:454px;top:691px;width:120px;height:16px;background:rgba(200,122,40,.72);overflow:hidden;white-space:nowrap;"><span style="position:absolute;left:1px;top:0.0px;font-size:13.2px;line-height:15px;color:#111;transform:scaleX(.955);transform-origin:0 0">BP_AttackRotationSet</span></div>
<div class="a" style="left:578px;top:691px;width:127px;height:16px;background:rgba(200,122,40,.72);overflow:hidden;white-space:nowrap;"><span style="position:absolute;left:1px;top:0.0px;font-size:13.2px;line-height:15px;color:#111;transform:scaleX(.955);transform-origin:0 0">BP_AttackRotationSet</span></div>
<div class="a" style="left:13px;top:717px;width:128px;height:16px;background:rgba(200,122,40,.72);overflow:hidden;white-space:nowrap;"><span style="position:absolute;left:1px;top:0.0px;font-size:13.2px;line-height:15px;color:#111;transform:scaleX(.955);transform-origin:0 0">BP_AttackRotationSet</span></div>
<div class="a" style="left:386px;top:717px;width:95px;height:16px;background:rgba(200,122,40,.72);overflow:hidden;white-space:nowrap;"><span style="position:absolute;left:1px;top:0.0px;font-size:13.2px;line-height:15px;color:#111;transform:scaleX(.955);transform-origin:0 0">BP_AttackRotationSet</span></div>
<div class="a" style="left:485px;top:717px;width:126px;height:16px;background:rgba(200,122,40,.72);overflow:hidden;white-space:nowrap;"><span style="position:absolute;left:1px;top:0.0px;font-size:13.2px;line-height:15px;color:#111;transform:scaleX(.955);transform-origin:0 0">BP_AttackRotationSet</span></div>
<div class="a" style="left:618px;top:717px;width:127px;height:16px;background:rgba(200,122,40,.72);overflow:hidden;white-space:nowrap;"><span style="position:absolute;left:1px;top:0.0px;font-size:13.2px;line-height:15px;color:#111;transform:scaleX(.955);transform-origin:0 0">BP_AttackRotationSet</span></div>
<div class="a" style="left:628px;top:738px;width:117px;height:19px;background:rgba(232,170,170,.55);overflow:hidden;white-space:nowrap;"><span style="position:absolute;left:1px;top:1.5px;font-size:13.2px;line-height:15px;color:#111;transform:scaleX(.955);transform-origin:0 0">BP_SweepAttack</span></div>
<div class="a" style="left:509px;top:738px;width:98px;height:19px;background:rgba(232,170,170,.55);overflow:hidden;white-space:nowrap;"><span style="position:absolute;left:1px;top:1.5px;font-size:13.2px;line-height:15px;color:#111;transform:scaleX(.955);transform-origin:0 0">BP_SweepAttack</span></div>
<div class="a" style="left:509px;top:738px;width:33px;height:19px;border:1px solid rgba(120,80,80,.5)"></div>
<div class="a" style="left:424px;top:738px;width:77px;height:19px;background:rgba(232,170,170,.55);overflow:hidden;white-space:nowrap;border:1px solid #111"><span style="position:absolute;left:1px;top:1.5px;font-size:13.2px;line-height:15px;color:#111;transform:scaleX(.955);transform-origin:0 0">BP_SweepAttack</span></div>
<div class="a" style="left:148px;top:767px;width:96px;height:15px;background:#d2cda2;overflow:hidden;white-space:nowrap;"><span style="position:absolute;left:1px;top:-0.5px;font-size:13.2px;line-height:15px;color:#111;transform:scaleX(.955);transform-origin:0 0">voc_attack_long</span></div>
<div class="a" style="left:412px;top:767px;width:70px;height:15px;background:rgba(160,110,220,.72);overflow:hidden;white-space:nowrap;"><span style="position:absolute;left:1px;top:-0.5px;font-size:13.2px;line-height:15px;color:#111;transform:scaleX(.955);transform-origin:0 0">swish_claw</span></div>
<div class="a" style="left:509px;top:767px;width:69px;height:15px;background:rgba(160,110,220,.72);overflow:hidden;white-space:nowrap;"><span style="position:absolute;left:1px;top:-0.5px;font-size:13.2px;line-height:15px;color:#111;transform:scaleX(.955);transform-origin:0 0">swish_claw</span></div>
<div class="a" style="left:628px;top:767px;width:159px;height:15px;background:rgba(160,110,220,.72);overflow:hidden;white-space:nowrap;"><span style="position:absolute;left:1px;top:-0.5px;font-size:13.2px;line-height:15px;color:#111;transform:scaleX(.955);transform-origin:0 0">npc_werehyena_slash_Cue</span></div>
<svg class="a" style="left:688px;top:659px" width="10" height="22"><path d="M1.3 2 Q1.3 0.5 3 0.5 L7 0.5 Q8.7 0.5 8.7 2 L8.7 5 Q8.7 7.5 6 9.5 L6 12.5 Q8.7 14.5 8.7 17 L8.7 20 Q8.7 21.5 7 21.5 L3 21.5 Q1.3 21.5 1.3 20 L1.3 17 Q1.3 14.5 4 12.5 L4 9.5 Q1.3 7.5 1.3 5 Z" fill="#ff0a0a" stroke="#3a0000" stroke-width=".6"/></svg>
<div class="a" style="left:10px;top:659px;width:5px;height:22px;overflow:hidden"><svg class="a" style="left:-5px;top:0px" width="10" height="22"><path d="M1.3 2 Q1.3 0.5 3 0.5 L7 0.5 Q8.7 0.5 8.7 2 L8.7 5 Q8.7 7.5 6 9.5 L6 12.5 Q8.7 14.5 8.7 17 L8.7 20 Q8.7 21.5 7 21.5 L3 21.5 Q1.3 21.5 1.3 20 L1.3 17 Q1.3 14.5 4 12.5 L4 9.5 Q1.3 7.5 1.3 5 Z" fill="#ff0a0a" stroke="#3a0000" stroke-width=".6"/></svg></div>
<div class="a" style="left:10px;top:711px;width:5px;height:22px;overflow:hidden"><svg class="a" style="left:-5px;top:0px" width="10" height="22"><path d="M1.3 2 Q1.3 0.5 3 0.5 L7 0.5 Q8.7 0.5 8.7 2 L8.7 5 Q8.7 7.5 6 9.5 L6 12.5 Q8.7 14.5 8.7 17 L8.7 20 Q8.7 21.5 7 21.5 L3 21.5 Q1.3 21.5 1.3 20 L1.3 17 Q1.3 14.5 4 12.5 L4 9.5 Q1.3 7.5 1.3 5 Z" fill="#ff0a0a" stroke="#3a0000" stroke-width=".6"/></svg></div>
<svg class="a" style="left:294px;top:685px" width="10" height="22"><path d="M1.3 2 Q1.3 0.5 3 0.5 L7 0.5 Q8.7 0.5 8.7 2 L8.7 5 Q8.7 7.5 6 9.5 L6 12.5 Q8.7 14.5 8.7 17 L8.7 20 Q8.7 21.5 7 21.5 L3 21.5 Q1.3 21.5 1.3 20 L1.3 17 Q1.3 14.5 4 12.5 L4 9.5 Q1.3 7.5 1.3 5 Z" fill="#ff0a0a" stroke="#3a0000" stroke-width=".6"/></svg>
<svg class="a" style="left:377px;top:685px" width="10" height="22"><path d="M1.3 2 Q1.3 0.5 3 0.5 L7 0.5 Q8.7 0.5 8.7 2 L8.7 5 Q8.7 7.5 6 9.5 L6 12.5 Q8.7 14.5 8.7 17 L8.7 20 Q8.7 21.5 7 21.5 L3 21.5 Q1.3 21.5 1.3 20 L1.3 17 Q1.3 14.5 4 12.5 L4 9.5 Q1.3 7.5 1.3 5 Z" fill="#ff0a0a" stroke="#3a0000" stroke-width=".6"/></svg>
<svg class="a" style="left:446px;top:685px" width="10" height="22"><path d="M1.3 2 Q1.3 0.5 3 0.5 L7 0.5 Q8.7 0.5 8.7 2 L8.7 5 Q8.7 7.5 6 9.5 L6 12.5 Q8.7 14.5 8.7 17 L8.7 20 Q8.7 21.5 7 21.5 L3 21.5 Q1.3 21.5 1.3 20 L1.3 17 Q1.3 14.5 4 12.5 L4 9.5 Q1.3 7.5 1.3 5 Z" fill="#ff0a0a" stroke="#3a0000" stroke-width=".6"/></svg>
<svg class="a" style="left:475px;top:685px" width="10" height="22"><path d="M1.3 2 Q1.3 0.5 3 0.5 L7 0.5 Q8.7 0.5 8.7 2 L8.7 5 Q8.7 7.5 6 9.5 L6 12.5 Q8.7 14.5 8.7 17 L8.7 20 Q8.7 21.5 7 21.5 L3 21.5 Q1.3 21.5 1.3 20 L1.3 17 Q1.3 14.5 4 12.5 L4 9.5 Q1.3 7.5 1.3 5 Z" fill="#ff0a0a" stroke="#3a0000" stroke-width=".6"/></svg>
<svg class="a" style="left:569px;top:685px" width="10" height="22"><path d="M1.3 2 Q1.3 0.5 3 0.5 L7 0.5 Q8.7 0.5 8.7 2 L8.7 5 Q8.7 7.5 6 9.5 L6 12.5 Q8.7 14.5 8.7 17 L8.7 20 Q8.7 21.5 7 21.5 L3 21.5 Q1.3 21.5 1.3 20 L1.3 17 Q1.3 14.5 4 12.5 L4 9.5 Q1.3 7.5 1.3 5 Z" fill="#ff0a0a" stroke="#3a0000" stroke-width=".6"/></svg>
<svg class="a" style="left:608px;top:685px" width="10" height="22"><path d="M1.3 2 Q1.3 0.5 3 0.5 L7 0.5 Q8.7 0.5 8.7 2 L8.7 5 Q8.7 7.5 6 9.5 L6 12.5 Q8.7 14.5 8.7 17 L8.7 20 Q8.7 21.5 7 21.5 L3 21.5 Q1.3 21.5 1.3 20 L1.3 17 Q1.3 14.5 4 12.5 L4 9.5 Q1.3 7.5 1.3 5 Z" fill="#ff0a0a" stroke="#3a0000" stroke-width=".6"/></svg>
<svg class="a" style="left:292px;top:711px" width="10" height="22"><path d="M1.3 2 Q1.3 0.5 3 0.5 L7 0.5 Q8.7 0.5 8.7 2 L8.7 5 Q8.7 7.5 6 9.5 L6 12.5 Q8.7 14.5 8.7 17 L8.7 20 Q8.7 21.5 7 21.5 L3 21.5 Q1.3 21.5 1.3 20 L1.3 17 Q1.3 14.5 4 12.5 L4 9.5 Q1.3 7.5 1.3 5 Z" fill="#ff0a0a" stroke="#3a0000" stroke-width=".6"/></svg>
<svg class="a" style="left:377px;top:711px" width="10" height="22"><path d="M1.3 2 Q1.3 0.5 3 0.5 L7 0.5 Q8.7 0.5 8.7 2 L8.7 5 Q8.7 7.5 6 9.5 L6 12.5 Q8.7 14.5 8.7 17 L8.7 20 Q8.7 21.5 7 21.5 L3 21.5 Q1.3 21.5 1.3 20 L1.3 17 Q1.3 14.5 4 12.5 L4 9.5 Q1.3 7.5 1.3 5 Z" fill="#ff0a0a" stroke="#3a0000" stroke-width=".6"/></svg>
<svg class="a" style="left:446px;top:711px" width="10" height="22"><path d="M1.3 2 Q1.3 0.5 3 0.5 L7 0.5 Q8.7 0.5 8.7 2 L8.7 5 Q8.7 7.5 6 9.5 L6 12.5 Q8.7 14.5 8.7 17 L8.7 20 Q8.7 21.5 7 21.5 L3 21.5 Q1.3 21.5 1.3 20 L1.3 17 Q1.3 14.5 4 12.5 L4 9.5 Q1.3 7.5 1.3 5 Z" fill="#ff0a0a" stroke="#3a0000" stroke-width=".6"/></svg>
<svg class="a" style="left:475px;top:711px" width="10" height="22"><path d="M1.3 2 Q1.3 0.5 3 0.5 L7 0.5 Q8.7 0.5 8.7 2 L8.7 5 Q8.7 7.5 6 9.5 L6 12.5 Q8.7 14.5 8.7 17 L8.7 20 Q8.7 21.5 7 21.5 L3 21.5 Q1.3 21.5 1.3 20 L1.3 17 Q1.3 14.5 4 12.5 L4 9.5 Q1.3 7.5 1.3 5 Z" fill="#ff0a0a" stroke="#3a0000" stroke-width=".6"/></svg>
<svg class="a" style="left:568px;top:711px" width="10" height="22"><path d="M1.3 2 Q1.3 0.5 3 0.5 L7 0.5 Q8.7 0.5 8.7 2 L8.7 5 Q8.7 7.5 6 9.5 L6 12.5 Q8.7 14.5 8.7 17 L8.7 20 Q8.7 21.5 7 21.5 L3 21.5 Q1.3 21.5 1.3 20 L1.3 17 Q1.3 14.5 4 12.5 L4 9.5 Q1.3 7.5 1.3 5 Z" fill="#ff0a0a" stroke="#3a0000" stroke-width=".6"/></svg>
<svg class="a" style="left:609px;top:711px" width="10" height="22"><path d="M1.3 2 Q1.3 0.5 3 0.5 L7 0.5 Q8.7 0.5 8.7 2 L8.7 5 Q8.7 7.5 6 9.5 L6 12.5 Q8.7 14.5 8.7 17 L8.7 20 Q8.7 21.5 7 21.5 L3 21.5 Q1.3 21.5 1.3 20 L1.3 17 Q1.3 14.5 4 12.5 L4 9.5 Q1.3 7.5 1.3 5 Z" fill="#ff0a0a" stroke="#3a0000" stroke-width=".6"/></svg>
<div class="a" style="left:862px;top:711px;width:6px;height:22px;overflow:hidden"><svg class="a" style="left:0px;top:0px" width="10" height="22"><path d="M1.3 2 Q1.3 0.5 3 0.5 L7 0.5 Q8.7 0.5 8.7 2 L8.7 5 Q8.7 7.5 6 9.5 L6 12.5 Q8.7 14.5 8.7 17 L8.7 20 Q8.7 21.5 7 21.5 L3 21.5 Q1.3 21.5 1.3 20 L1.3 17 Q1.3 14.5 4 12.5 L4 9.5 Q1.3 7.5 1.3 5 Z" fill="#ff0a0a" stroke="#3a0000" stroke-width=".6"/></svg></div>
<svg class="a" style="left:416px;top:737px" width="10" height="22"><path d="M1.3 2 Q1.3 0.5 3 0.5 L7 0.5 Q8.7 0.5 8.7 2 L8.7 5 Q8.7 7.5 6 9.5 L6 12.5 Q8.7 14.5 8.7 17 L8.7 20 Q8.7 21.5 7 21.5 L3 21.5 Q1.3 21.5 1.3 20 L1.3 17 Q1.3 14.5 4 12.5 L4 9.5 Q1.3 7.5 1.3 5 Z" fill="#f0b010" stroke="#3a0000" stroke-width=".6"/></svg>
<svg class="a" style="left:500px;top:737px" width="10" height="22"><path d="M1.3 2 Q1.3 0.5 3 0.5 L7 0.5 Q8.7 0.5 8.7 2 L8.7 5 Q8.7 7.5 6 9.5 L6 12.5 Q8.7 14.5 8.7 17 L8.7 20 Q8.7 21.5 7 21.5 L3 21.5 Q1.3 21.5 1.3 20 L1.3 17 Q1.3 14.5 4 12.5 L4 9.5 Q1.3 7.5 1.3 5 Z" fill="#ff0a0a" stroke="#3a0000" stroke-width=".6"/></svg>
<svg class="a" style="left:619px;top:737px" width="10" height="22"><path d="M1.3 2 Q1.3 0.5 3 0.5 L7 0.5 Q8.7 0.5 8.7 2 L8.7 5 Q8.7 7.5 6 9.5 L6 12.5 Q8.7 14.5 8.7 17 L8.7 20 Q8.7 21.5 7 21.5 L3 21.5 Q1.3 21.5 1.3 20 L1.3 17 Q1.3 14.5 4 12.5 L4 9.5 Q1.3 7.5 1.3 5 Z" fill="#ff0a0a" stroke="#3a0000" stroke-width=".6"/></svg>
<svg class="a" style="left:139.5px;top:763px" width="10" height="22"><path d="M1.3 2 Q1.3 0.5 3 0.5 L7 0.5 Q8.7 0.5 8.7 2 L8.7 5 Q8.7 7.5 6 9.5 L6 12.5 Q8.7 14.5 8.7 17 L8.7 20 Q8.7 21.5 7 21.5 L3 21.5 Q1.3 21.5 1.3 20 L1.3 17 Q1.3 14.5 4 12.5 L4 9.5 Q1.3 7.5 1.3 5 Z" fill="#ff0a0a" stroke="#3a0000" stroke-width=".6"/></svg>
<svg class="a" style="left:404px;top:763px" width="10" height="22"><path d="M1.3 2 Q1.3 0.5 3 0.5 L7 0.5 Q8.7 0.5 8.7 2 L8.7 5 Q8.7 7.5 6 9.5 L6 12.5 Q8.7 14.5 8.7 17 L8.7 20 Q8.7 21.5 7 21.5 L3 21.5 Q1.3 21.5 1.3 20 L1.3 17 Q1.3 14.5 4 12.5 L4 9.5 Q1.3 7.5 1.3 5 Z" fill="#ff0a0a" stroke="#3a0000" stroke-width=".6"/></svg>
<svg class="a" style="left:500px;top:763px" width="10" height="22"><path d="M1.3 2 Q1.3 0.5 3 0.5 L7 0.5 Q8.7 0.5 8.7 2 L8.7 5 Q8.7 7.5 6 9.5 L6 12.5 Q8.7 14.5 8.7 17 L8.7 20 Q8.7 21.5 7 21.5 L3 21.5 Q1.3 21.5 1.3 20 L1.3 17 Q1.3 14.5 4 12.5 L4 9.5 Q1.3 7.5 1.3 5 Z" fill="#ff0a0a" stroke="#3a0000" stroke-width=".6"/></svg>
<svg class="a" style="left:620px;top:763px" width="10" height="22"><path d="M1.3 2 Q1.3 0.5 3 0.5 L7 0.5 Q8.7 0.5 8.7 2 L8.7 5 Q8.7 7.5 6 9.5 L6 12.5 Q8.7 14.5 8.7 17 L8.7 20 Q8.7 21.5 7 21.5 L3 21.5 Q1.3 21.5 1.3 20 L1.3 17 Q1.3 14.5 4 12.5 L4 9.5 Q1.3 7.5 1.3 5 Z" fill="#ff0a0a" stroke="#3a0000" stroke-width=".6"/></svg>
<svg class="a" style="left:607px;top:741px" width="14" height="14"><path d="M1 7 L6 2 L6 5 L12 5 L12 9 L6 9 L6 12 Z" fill="#eee" stroke="#555" stroke-width="1"/></svg>
<svg class="a" style="left:728px;top:741px" width="14" height="14"><path d="M1 7 L6 2 L6 5 L12 5 L12 9 L6 9 L6 12 Z" fill="#eee" stroke="#555" stroke-width="1"/></svg>
<div class="a" style="left:8px;top:797px;width:862px;height:1px;background:#4a4a4a"></div>
<div class="a" style="left:7px;top:851px;width:42px;height:14px;background:linear-gradient(#f0f0f0,#c0c0c0);border:1px solid #222;border-radius:2px"><span style="position:absolute;left:6px;top:1px;font-size:12px;color:#222">Add</span></div>
<div class="a" style="left:50px;top:851px;width:19px;height:14px;background:linear-gradient(#f0f0f0,#c0c0c0);border:1px solid #222;border-radius:2px"><svg width="17" height="12"><path d="M4 9 L12 9 L8 13 Z" fill="#111"/></svg></div>
<div class="a" style="left:77px;top:853px;white-space:nowrap;font-size:12px;color:#9a9a9a;transform:scaleX(.95);transform-origin:0 0">Total Number : 0</div>
<div class="a" style="left:3px;top:858px;width:1062px;height:7px;background:linear-gradient(rgba(30,30,30,0),#222 80%)"></div>
<div class="a" style="left:1052px;top:389px;width:9px;height:448px;background:#dcdfdf;border:1px solid #1e1e1e;border-radius:3px"></div>
<div class="a" style="left:1056px;top:837px;width:1px;height:24px;background:#6a6a6a"></div>
<div class="a" style="left:1060px;top:385px;width:5px;height:480px;background:#2e2e2e"></div>
<div class="a" style="left:1px;top:865px;width:1066px;height:62px;background:#5f5f5f"></div>
<div class="a" style="left:3px;top:866px;width:1061px;height:23px;background:#646464;border:1px solid #4c4c4c"></div>
<div class="a" style="left:11px;top:871px;white-space:nowrap;font-size:12.2px;color:#e4e4e4;line-height:14px">Animation :&nbsp; AM_Attack_DevolvedWerewolf_Stunbreak</div>
<div class="a" style="left:549px;top:871px;white-space:nowrap;font-size:12.2px;color:#e4e4e4;line-height:14px;transform:scaleX(.99);transform-origin:0 0">Percentage:&nbsp; 8.33% CurrentTime:&nbsp; 0.369 / 4.433 (second(s)) Current Frame:&nbsp; 11.00 / 132 Frame</div>
<div class="a" style="left:3px;top:891px;width:839px;height:33px;background:#5e5e5e;border:1px solid #4c4c4c"></div>
<div class="a" style="left:5px;top:894px;width:1px;height:29px;background:#e0e0e0"></div>
<div class="a" style="left:6.5px;top:895px;white-space:nowrap;font-size:12px;color:#f0f0f0;line-height:13px">0</div>
<div class="a" style="left:27px;top:902px;width:1px;height:13px;background:#d8d8d8"></div>
<div class="a" style="left:49px;top:894px;width:1px;height:29px;background:#e0e0e0"></div>
<div class="a" style="left:50.5px;top:895px;white-space:nowrap;font-size:12px;color:#f0f0f0;line-height:13px">7</div>
<div class="a" style="left:71px;top:902px;width:1px;height:13px;background:#d8d8d8"></div>
<div class="a" style="left:93px;top:894px;width:1px;height:29px;background:#e0e0e0"></div>
<div class="a" style="left:94.5px;top:895px;white-space:nowrap;font-size:12px;color:#f0f0f0;line-height:13px">14</div>
<div class="a" style="left:115px;top:902px;width:1px;height:13px;background:#d8d8d8"></div>
<div class="a" style="left:137px;top:894px;width:1px;height:29px;background:#e0e0e0"></div>
<div class="a" style="left:138.5px;top:895px;white-space:nowrap;font-size:12px;color:#f0f0f0;line-height:13px">21</div>
<div class="a" style="left:160px;top:902px;width:1px;height:13px;background:#d8d8d8"></div>
<div class="a" style="left:182px;top:894px;width:1px;height:29px;background:#e0e0e0"></div>
<div class="a" style="left:183.5px;top:895px;white-space:nowrap;font-size:12px;color:#f0f0f0;line-height:13px">28</div>
<div class="a" style="left:204px;top:902px;width:1px;height:13px;background:#d8d8d8"></div>
<div class="a" style="left:226px;top:894px;width:1px;height:29px;background:#e0e0e0"></div>
<div class="a" style="left:227.5px;top:895px;white-space:nowrap;font-size:12px;color:#f0f0f0;line-height:13px">35</div>
<div class="a" style="left:248px;top:902px;width:1px;height:13px;background:#d8d8d8"></div>
<div class="a" style="left:270px;top:894px;width:1px;height:29px;background:#e0e0e0"></div>
<div class="a" style="left:271.5px;top:895px;white-space:nowrap;font-size:12px;color:#f0f0f0;line-height:13px">42</div>
<div class="a" style="left:292px;top:902px;width:1px;height:13px;background:#d8d8d8"></div>
<div class="a" style="left:314px;top:894px;width:1px;height:29px;background:#e0e0e0"></div>
<div class="a" style="left:315.5px;top:895px;white-space:nowrap;font-size:12px;color:#f0f0f0;line-height:13px">49</div>
<div class="a" style="left:336px;top:902px;width:1px;height:13px;background:#d8d8d8"></div>
<div class="a" style="left:358px;top:894px;width:1px;height:29px;background:#e0e0e0"></div>
<div class="a" style="left:359.5px;top:895px;white-space:nowrap;font-size:12px;color:#f0f0f0;line-height:13px">56</div>
<div class="a" style="left:380px;top:902px;width:1px;height:13px;background:#d8d8d8"></div>
<div class="a" style="left:402px;top:894px;width:1px;height:29px;background:#e0e0e0"></div>
<div class="a" style="left:403.5px;top:895px;white-space:nowrap;font-size:12px;color:#f0f0f0;line-height:13px">63</div>
<div class="a" style="left:424px;top:902px;width:1px;height:13px;background:#d8d8d8"></div>
<div class="a" style="left:447px;top:894px;width:1px;height:29px;background:#e0e0e0"></div>
<div class="a" style="left:448.5px;top:895px;white-space:nowrap;font-size:12px;color:#f0f0f0;line-height:13px">70</div>
<div class="a" style="left:469px;top:902px;width:1px;height:13px;background:#d8d8d8"></div>
<div class="a" style="left:491px;top:894px;width:1px;height:29px;background:#e0e0e0"></div>
<div class="a" style="left:492.5px;top:895px;white-space:nowrap;font-size:12px;color:#f0f0f0;line-height:13px">77</div>
<div class="a" style="left:513px;top:902px;width:1px;height:13px;background:#d8d8d8"></div>
<div class="a" style="left:535px;top:894px;width:1px;height:29px;background:#e0e0e0"></div>
<div class="a" style="left:536.5px;top:895px;white-space:nowrap;font-size:12px;color:#f0f0f0;line-height:13px">84</div>
<div class="a" style="left:557px;top:902px;width:1px;height:13px;background:#d8d8d8"></div>
<div class="a" style="left:579px;top:894px;width:1px;height:29px;background:#e0e0e0"></div>
<div class="a" style="left:580.5px;top:895px;white-space:nowrap;font-size:12px;color:#f0f0f0;line-height:13px">91</div>
<div class="a" style="left:601px;top:902px;width:1px;height:13px;background:#d8d8d8"></div>
<div class="a" style="left:623px;top:894px;width:1px;height:29px;background:#e0e0e0"></div>
<div class="a" style="left:624.5px;top:895px;white-space:nowrap;font-size:12px;color:#f0f0f0;line-height:13px">98</div>
<div class="a" style="left:645px;top:902px;width:1px;height:13px;background:#d8d8d8"></div>
<div class="a" style="left:667px;top:894px;width:1px;height:29px;background:#e0e0e0"></div>
<div class="a" style="left:668.5px;top:895px;white-space:nowrap;font-size:12px;color:#f0f0f0;line-height:13px">105</div>
<div class="a" style="left:689px;top:902px;width:1px;height:13px;background:#d8d8d8"></div>
<div class="a" style="left:711px;top:894px;width:1px;height:29px;background:#e0e0e0"></div>
<div class="a" style="left:712.5px;top:895px;white-space:nowrap;font-size:12px;color:#f0f0f0;line-height:13px">112</div>
<div class="a" style="left:733px;top:902px;width:1px;height:13px;background:#d8d8d8"></div>
<div class="a" style="left:756px;top:894px;width:1px;height:29px;background:#e0e0e0"></div>
<div class="a" style="left:757.5px;top:895px;white-space:nowrap;font-size:12px;color:#f0f0f0;line-height:13px">119</div>
<div class="a" style="left:778px;top:902px;width:1px;height:13px;background:#d8d8d8"></div>
<div class="a" style="left:800px;top:894px;width:1px;height:29px;background:#e0e0e0"></div>
<div class="a" style="left:801.5px;top:895px;white-space:nowrap;font-size:12px;color:#f0f0f0;line-height:13px">126</div>
<div class="a" style="left:822px;top:902px;width:1px;height:13px;background:#d8d8d8"></div>
<div class="a" style="left:67px;top:894px;width:14px;height:29px;background:rgba(160,60,60,.75);border:1px solid #6a3a3a;border-radius:2px"></div>
<svg class="a" style="left:850px;top:896px" width="215" height="26"><g fill="#d2d2d2">
<path d="M9 12 L18 3 L18 21 Z"/><rect x="20" y="3" width="3" height="18" rx="1"/><rect x="25" y="3" width="3" height="18" rx="1"/>
<path d="M36 12 L44 4 L44 20 Z"/><rect x="46" y="4" width="3" height="16" rx="1"/>
<path d="M61 12 L76 2 L76 22 Z"/>
<path d="M118 2 L133 12 L118 22 Z"/>
<rect x="146" y="4" width="3" height="16" rx="1"/><path d="M151 4 L159 12 L151 20 Z"/>
<rect x="166" y="3" width="3" height="18" rx="1"/><rect x="171" y="3" width="3" height="18" rx="1"/><path d="M176 3 L185 12 L176 21 Z"/>
</g><circle cx="97" cy="12" r="9.2" stroke="#d2d2d2" stroke-width="2" fill="none"/><circle cx="97" cy="12" r="5.5" fill="#c03a3a"/>
<path d="M194 13 V7.5 H203 M207 11 V16.5 H198" stroke="#d2d2d2" stroke-width="2.6" fill="none"/><path d="M202 2.5 L208 7.5 L202 12.5 Z M199 11.5 L193 16.5 L199 21.5 Z" fill="#d2d2d2"/>
</svg>

<div class="a" style="left:1076px;top:3px;width:150px;height:21px;background:#5e5e5e;border-top:1px solid #a89a38;border-radius:3px 3px 0 0"></div>
<svg class="a" style="left:1080px;top:5px" width="20" height="18"><circle cx="8" cy="8" r="6.5" fill="#e8e8e8" stroke="#3a6ad0" stroke-width="1.6"/><path d="M12.5 12.5 L17 17" stroke="#3a6ad0" stroke-width="2.2"/><text x="6" y="12" font-size="10" font-weight="bold" font-family="Liberation Serif" fill="#222">i</text></svg>
<div class="a" style="left:1102px;top:6px;white-space:nowrap;font-size:13px;color:#e2e2e2;line-height:15px;text-shadow:1px 1px 1px #111;transform:scaleX(.95);transform-origin:0 0">Details</div>
<svg class="a" style="left:1208px;top:8px" width="12" height="12"><path d="M2 2 L10 10 M10 2 L2 10" stroke="#8a8a8a" stroke-width="1.2"/></svg>
<div class="a" style="left:1072px;top:24px;width:488px;height:879px;background:#606060"></div>
<div class="a" style="left:1078px;top:29px;width:407px;height:18px;background:#cbcbcb;border-radius:3px"></div>
<div class="a" style="left:1084px;top:31px;white-space:nowrap;font-size:12.6px;color:#8c8c8c;line-height:14px">Search</div>
<svg class="a" style="left:1468px;top:30px" width="16" height="16"><circle cx="9" cy="6.5" r="4.6" stroke="#111" stroke-width="2" fill="none"/><path d="M5.5 10 L2 14" stroke="#111" stroke-width="2.6" stroke-linecap="round"/></svg>
<div class="a" style="left:1494px;top:27px;width:26px;height:22px;background:linear-gradient(#e6e6e6,#a8a8a8);border:1px solid #444;border-radius:2px"><svg width="24" height="20"><g fill="#555"><rect x="6" y="4" width="2" height="2"/><rect x="9" y="4" width="9" height="2"/><rect x="6" y="7" width="2" height="2"/><rect x="9" y="7" width="9" height="2"/><rect x="6" y="10" width="2" height="2"/><rect x="9" y="10" width="9" height="2"/><rect x="6" y="13" width="2" height="2"/><rect x="9" y="13" width="9" height="2"/></g></svg></div>
<svg class="a" style="left:1522px;top:30px" width="36" height="16"><ellipse cx="10" cy="8" rx="8.5" ry="5" fill="#c8c8c8"/><circle cx="10" cy="8" r="3.5" fill="#4a64a0"/><circle cx="10" cy="6.5" r="1.2" fill="#c8c8c8"/><path d="M22 5 L30 5 L26 9 Z" fill="#b0b0b0"/></svg>
<div class="a" style="left:1074px;top:50px;width:483px;height:851px;background:#3e3e3e"></div>
<div class="a" style="left:1074px;top:50px;width:483px;height:16px;background:#2f2f2f"></div><svg class="a" style="left:1076px;top:49px" width="10" height="10"><path d="M1 9 L8 9 L8 2 Z" fill="#c8c8c8"/></svg><div class="a" style="left:1088px;top:47.5px;white-space:nowrap;font-size:13.2px;font-weight:bold;color:#e8e8e8;line-height:15px;text-shadow:1px 1px 1px #000;transform:scaleX(.92);transform-origin:0 0">Anim Notify</div>
<div class="a" style="left:1074px;top:651px;width:483px;height:2px;background:#575757"></div><div class="a" style="left:1074px;top:653px;width:483px;height:23px;background:#2f2f2f"></div><svg class="a" style="left:1076px;top:657px" width="10" height="10"><path d="M1 9 L8 9 L8 2 Z" fill="#c8c8c8"/></svg><div class="a" style="left:1088px;top:655.5px;white-space:nowrap;font-size:13.2px;font-weight:bold;color:#e8e8e8;line-height:15px;text-shadow:1px 1px 1px #000;transform:scaleX(.92);transform-origin:0 0">Trigger Settings</div>
<div class="a" style="left:1074px;top:752px;width:483px;height:2px;background:#575757"></div><div class="a" style="left:1074px;top:754px;width:483px;height:22px;background:#2f2f2f"></div><svg class="a" style="left:1076px;top:758px" width="10" height="10"><path d="M1 9 L8 9 L8 2 Z" fill="#c8c8c8"/></svg><div class="a" style="left:1088px;top:756.5px;white-space:nowrap;font-size:13.2px;font-weight:bold;color:#e8e8e8;line-height:15px;text-shadow:1px 1px 1px #000;transform:scaleX(.92);transform-origin:0 0">Category</div>
<div class="a" style="left:1074px;top:852px;width:483px;height:2px;background:#575757"></div><div class="a" style="left:1074px;top:854px;width:483px;height:22px;background:#2f2f2f"></div><svg class="a" style="left:1076px;top:857px" width="10" height="10"><path d="M1 9 L8 9 L8 2 Z" fill="#c8c8c8"/></svg><div class="a" style="left:1088px;top:855.5px;white-space:nowrap;font-size:13.2px;font-weight:bold;color:#e8e8e8;line-height:15px;text-shadow:1px 1px 1px #000;transform:scaleX(.92);transform-origin:0 0">Anim Link</div>
<div class="a" style="left:1235px;top:66px;width:1px;height:586px;background:#2a2a2a"></div>
<div class="a" style="left:1235px;top:676px;width:1px;height:76px;background:#2a2a2a"></div>
<div class="a" style="left:1235px;top:776px;width:1px;height:76px;background:#2a2a2a"></div>
<div class="a" style="left:1235px;top:876px;width:1px;height:24px;background:#2a2a2a"></div>
<div class="a" style="left:1090px;top:71px;white-space:nowrap;font-size:12.2px;color:#d4d4d4;line-height:14px;transform:scaleX(.93);transform-origin:0 0">Notify</div>
<svg class="a" style="left:1076px;top:96px" width="10" height="10"><path d="M1 9 L8 9 L8 2 Z" fill="#c0c0c0"/></svg>
<div class="a" style="left:1090px;top:95px;white-space:nowrap;font-size:12.2px;color:#d4d4d4;line-height:14px;transform:scaleX(.93);transform-origin:0 0">Collision Transform</div>
<svg class="a" style="left:1242px;top:96px" width="11" height="11"><path d="M2.5 3.5 L7.5 3.5 L7.5 8.5 L3 8.5" stroke="#111" stroke-width="2.6" fill="none" opacity=".6"/><path d="M2.5 3.5 L7.5 3.5 L7.5 8.5 L3 8.5" stroke="#f0f020" stroke-width="1.4" fill="none"/><path d="M0.5 3.5 L3.5 1 L3.5 6 Z" fill="#f0f020"/></svg>
<div class="a" style="left:1100px;top:120px;white-space:nowrap;font-size:12.2px;color:#d4d4d4;line-height:14px;transform:scaleX(.93);transform-origin:0 0">Location</div>
<div class="a" style="left:1241px;top:119px;width:97px;height:17px;background:#d8d8d8;border-radius:3px"><div style="position:absolute;left:0;top:0;width:13px;height:17px;background:#c8300c;border-radius:3px 0 0 3px"></div><div style="position:absolute;left:12px;top:0;width:4px;height:17px;background:#d8d8d8;border-radius:4px 0 0 4px"></div><div style="position:absolute;left:3px;top:1px;font-size:12.5px;line-height:15px;color:#fff">X</div><div style="position:absolute;left:19px;top:1px;font-size:12.4px;line-height:15px;color:#222">0.0</div><svg style="position:absolute;left:83px;top:3px" width="11" height="11"><path d="M3.3 1.2 L7.9 1.2 L7.9 5.8 Z M0 4 L0 9 L4.7 9 Z" fill="#000"/></svg></div>
<div class="a" style="left:1341px;top:119px;width:97px;height:17px;background:#d8d8d8;border-radius:3px"><div style="position:absolute;left:0;top:0;width:13px;height:17px;background:#6aa012;border-radius:3px 0 0 3px"></div><div style="position:absolute;left:12px;top:0;width:4px;height:17px;background:#d8d8d8;border-radius:4px 0 0 4px"></div><div style="position:absolute;left:3px;top:1px;font-size:12.5px;line-height:15px;color:#fff">Y</div><div style="position:absolute;left:19px;top:1px;font-size:12.4px;line-height:15px;color:#222">0.0</div><svg style="position:absolute;left:83px;top:3px" width="11" height="11"><path d="M3.3 1.2 L7.9 1.2 L7.9 5.8 Z M0 4 L0 9 L4.7 9 Z" fill="#000"/></svg></div>
<div class="a" style="left:1442px;top:119px;width:97px;height:17px;background:#d8d8d8;border-radius:3px"><div style="position:absolute;left:0;top:0;width:13px;height:17px;background:#2a7ae0;border-radius:3px 0 0 3px"></div><div style="position:absolute;left:12px;top:0;width:4px;height:17px;background:#d8d8d8;border-radius:4px 0 0 4px"></div><div style="position:absolute;left:3px;top:1px;font-size:12.5px;line-height:15px;color:#fff">Z</div><div style="position:absolute;left:19px;top:1px;font-size:12.4px;line-height:15px;color:#222">-25.0</div><svg style="position:absolute;left:83px;top:3px" width="11" height="11"><path d="M3.3 1.2 L7.9 1.2 L7.9 5.8 Z M0 4 L0 9 L4.7 9 Z" fill="#000"/></svg></div>
<div class="a" style="left:1100px;top:146px;white-space:nowrap;font-size:12.2px;color:#d4d4d4;line-height:14px;transform:scaleX(.93);transform-origin:0 0">Rotation</div>
<div class="a" style="left:1241px;top:145px;width:97px;height:17px;background:#d8d8d8;border-radius:3px"><div style="position:absolute;left:0;top:0;width:13px;height:17px;background:#c8300c;border-radius:3px 0 0 3px"></div><div style="position:absolute;left:12px;top:0;width:4px;height:17px;background:#d8d8d8;border-radius:4px 0 0 4px"></div><div style="position:absolute;left:3px;top:1px;font-size:12.5px;line-height:15px;color:#fff">X</div><div style="position:absolute;left:19px;top:1px;font-size:12.4px;line-height:15px;color:#222">0.0</div><svg style="position:absolute;left:83px;top:3px" width="11" height="11"><path d="M3.3 1.2 L7.9 1.2 L7.9 5.8 Z M0 4 L0 9 L4.7 9 Z" fill="#000"/></svg></div>
<div class="a" style="left:1341px;top:145px;width:97px;height:17px;background:#d8d8d8;border-radius:3px"><div style="position:absolute;left:0;top:0;width:13px;height:17px;background:#6aa012;border-radius:3px 0 0 3px"></div><div style="position:absolute;left:12px;top:0;width:4px;height:17px;background:#d8d8d8;border-radius:4px 0 0 4px"></div><div style="position:absolute;left:3px;top:1px;font-size:12.5px;line-height:15px;color:#fff">Y</div><div style="position:absolute;left:19px;top:1px;font-size:12.4px;line-height:15px;color:#222">0.0</div><svg style="position:absolute;left:83px;top:3px" width="11" height="11"><path d="M3.3 1.2 L7.9 1.2 L7.9 5.8 Z M0 4 L0 9 L4.7 9 Z" fill="#000"/></svg></div>
<div class="a" style="left:1442px;top:145px;width:97px;height:17px;background:#d8d8d8;border-radius:3px"><div style="position:absolute;left:0;top:0;width:13px;height:17px;background:#2a7ae0;border-radius:3px 0 0 3px"></div><div style="position:absolute;left:12px;top:0;width:4px;height:17px;background:#d8d8d8;border-radius:4px 0 0 4px"></div><div style="position:absolute;left:3px;top:1px;font-size:12.5px;line-height:15px;color:#fff">Z</div><div style="position:absolute;left:19px;top:1px;font-size:12.4px;line-height:15px;color:#222">0.0</div><svg style="position:absolute;left:83px;top:3px" width="11" height="11"><path d="M3.3 1.2 L7.9 1.2 L7.9 5.8 Z M0 4 L0 9 L4.7 9 Z" fill="#000"/></svg></div>
<div class="a" style="left:1100px;top:172px;white-space:nowrap;font-size:12.2px;color:#d4d4d4;line-height:14px;transform:scaleX(.93);transform-origin:0 0">Scale</div>
<div class="a" style="left:1241px;top:171px;width:97px;height:17px;background:#d8d8d8;border-radius:3px"><div style="position:absolute;left:0;top:0;width:13px;height:17px;background:#c8300c;border-radius:3px 0 0 3px"></div><div style="position:absolute;left:12px;top:0;width:4px;height:17px;background:#d8d8d8;border-radius:4px 0 0 4px"></div><div style="position:absolute;left:3px;top:1px;font-size:12.5px;line-height:15px;color:#fff">X</div><div style="position:absolute;left:19px;top:1px;font-size:12.4px;line-height:15px;color:#222">1.0</div><svg style="position:absolute;left:83px;top:3px" width="11" height="11"><path d="M3.3 1.2 L7.9 1.2 L7.9 5.8 Z M0 4 L0 9 L4.7 9 Z" fill="#000"/></svg></div>
<div class="a" style="left:1341px;top:171px;width:97px;height:17px;background:#d8d8d8;border-radius:3px"><div style="position:absolute;left:0;top:0;width:13px;height:17px;background:#6aa012;border-radius:3px 0 0 3px"></div><div style="position:absolute;left:12px;top:0;width:4px;height:17px;background:#d8d8d8;border-radius:4px 0 0 4px"></div><div style="position:absolute;left:3px;top:1px;font-size:12.5px;line-height:15px;color:#fff">Y</div><div style="position:absolute;left:19px;top:1px;font-size:12.4px;line-height:15px;color:#222">1.0</div><svg style="position:absolute;left:83px;top:3px" width="11" height="11"><path d="M3.3 1.2 L7.9 1.2 L7.9 5.8 Z M0 4 L0 9 L4.7 9 Z" fill="#000"/></svg></div>
<div class="a" style="left:1442px;top:171px;width:97px;height:17px;background:#d8d8d8;border-radius:3px"><div style="position:absolute;left:0;top:0;width:13px;height:17px;background:#2a7ae0;border-radius:3px 0 0 3px"></div><div style="position:absolute;left:12px;top:0;width:4px;height:17px;background:#d8d8d8;border-radius:4px 0 0 4px"></div><div style="position:absolute;left:3px;top:1px;font-size:12.5px;line-height:15px;color:#fff">Z</div><div style="position:absolute;left:19px;top:1px;font-size:12.4px;line-height:15px;color:#222">1.0</div><svg style="position:absolute;left:83px;top:3px" width="11" height="11"><path d="M3.3 1.2 L7.9 1.2 L7.9 5.8 Z M0 4 L0 9 L4.7 9 Z" fill="#000"/></svg></div>
<svg class="a" style="left:1076px;top:197px" width="10" height="12"><path d="M1.5 1.5 L7 5.5 L1.5 9.5 Z" stroke="#c0c0c0" stroke-width="1" fill="none"/></svg>
<div class="a" style="left:1090px;top:197px;white-space:nowrap;font-size:12.2px;color:#d4d4d4;line-height:14px;transform:scaleX(.93);transform-origin:0 0">End Collision Transform</div>
<svg class="a" style="left:1242px;top:198px" width="11" height="11"><path d="M2.5 3.5 L7.5 3.5 L7.5 8.5 L3 8.5" stroke="#111" stroke-width="2.6" fill="none" opacity=".6"/><path d="M2.5 3.5 L7.5 3.5 L7.5 8.5 L3 8.5" stroke="#f0f020" stroke-width="1.4" fill="none"/><path d="M0.5 3.5 L3.5 1 L3.5 6 Z" fill="#f0f020"/></svg>
<svg class="a" style="left:1076px;top:222px" width="10" height="12"><path d="M1.5 1.5 L7 5.5 L1.5 9.5 Z" stroke="#c0c0c0" stroke-width="1" fill="none"/></svg>
<div class="a" style="left:1090px;top:222px;white-space:nowrap;font-size:12.2px;color:#d4d4d4;line-height:14px;transform:scaleX(.93);transform-origin:0 0">Collision Extent</div>
<div class="a" style="left:1241px;top:221px;width:92px;height:17px;background:#d8d8d8;border-radius:3px"><div style="position:absolute;left:4px;top:1px;font-size:12.5px;line-height:15px;color:#222">X</div><div style="position:absolute;left:18px;top:1px;font-size:12.4px;line-height:15px;color:#222">100.0</div><svg style="position:absolute;left:78px;top:3px" width="11" height="11"><path d="M3.3 1.2 L7.9 1.2 L7.9 5.8 Z M0 4 L0 9 L4.7 9 Z" fill="#000"/></svg></div>
<div class="a" style="left:1337px;top:221px;width:93px;height:17px;background:#d8d8d8;border-radius:3px"><div style="position:absolute;left:4px;top:1px;font-size:12.5px;line-height:15px;color:#222">Y</div><div style="position:absolute;left:18px;top:1px;font-size:12.4px;line-height:15px;color:#222">1.0</div><svg style="position:absolute;left:79px;top:3px" width="11" height="11"><path d="M3.3 1.2 L7.9 1.2 L7.9 5.8 Z M0 4 L0 9 L4.7 9 Z" fill="#000"/></svg></div>
<div class="a" style="left:1434px;top:221px;width:92px;height:17px;background:#d8d8d8;border-radius:3px"><div style="position:absolute;left:4px;top:1px;font-size:12.5px;line-height:15px;color:#222">Z</div><div style="position:absolute;left:18px;top:1px;font-size:12.4px;line-height:15px;color:#222">75.0</div><svg style="position:absolute;left:78px;top:3px" width="11" height="11"><path d="M3.3 1.2 L7.9 1.2 L7.9 5.8 Z M0 4 L0 9 L4.7 9 Z" fill="#000"/></svg></div>
<svg class="a" style="left:1529px;top:223px" width="11" height="11"><path d="M2.5 3.5 L7.5 3.5 L7.5 8.5 L3 8.5" stroke="#111" stroke-width="2.6" fill="none" opacity=".6"/><path d="M2.5 3.5 L7.5 3.5 L7.5 8.5 L3 8.5" stroke="#f0f020" stroke-width="1.4" fill="none"/><path d="M0.5 3.5 L3.5 1 L3.5 6 Z" fill="#f0f020"/></svg>
<div class="a" style="left:1090px;top:247.5px;white-space:nowrap;font-size:12.2px;color:#d4d4d4;line-height:14px;transform:scaleX(.93);transform-origin:0 0">Capsule Half Height</div>
<div class="a" style="left:1241px;top:246px;width:109px;height:17px;background:#d8d8d8;border-radius:3px"><div style="position:absolute;left:6px;top:1px;font-size:12.4px;line-height:15px;color:#222">72.0</div><svg style="position:absolute;left:95px;top:3px" width="11" height="11"><path d="M3.3 1.2 L7.9 1.2 L7.9 5.8 Z M0 4 L0 9 L4.7 9 Z" fill="#000"/></svg></div>
<svg class="a" style="left:1355px;top:248px" width="11" height="11"><path d="M2.5 3.5 L7.5 3.5 L7.5 8.5 L3 8.5" stroke="#111" stroke-width="2.6" fill="none" opacity=".6"/><path d="M2.5 3.5 L7.5 3.5 L7.5 8.5 L3 8.5" stroke="#f0f020" stroke-width="1.4" fill="none"/><path d="M0.5 3.5 L3.5 1 L3.5 6 Z" fill="#f0f020"/></svg>
<div class="a" style="left:1090px;top:271.5px;white-space:nowrap;font-size:12.2px;color:#d4d4d4;line-height:14px;transform:scaleX(.93);transform-origin:0 0">Draw Debug</div>
<div class="a" style="left:1241.5px;top:271px;width:14px;height:14px;background:#a8a8a8;border-radius:2px"></div>
<div class="a" style="left:1090px;top:295.5px;white-space:nowrap;font-size:12.2px;color:#d4d4d4;line-height:14px;transform:scaleX(.93);transform-origin:0 0">Is Humanoid</div>
<div class="a" style="left:1241.5px;top:295px;width:14px;height:14px;background:#a8a8a8;border-radius:2px"></div>
<div class="a" style="left:1090px;top:319.5px;white-space:nowrap;font-size:12.2px;color:#d4d4d4;line-height:14px;transform:scaleX(.93);transform-origin:0 0">Collision Reach</div>
<div class="a" style="left:1241px;top:318px;width:109px;height:17px;background:#d8d8d8;border-radius:3px"><div style="position:absolute;left:6px;top:1px;font-size:12.4px;line-height:15px;color:#222">170.0</div><svg style="position:absolute;left:95px;top:3px" width="11" height="11"><path d="M3.3 1.2 L7.9 1.2 L7.9 5.8 Z M0 4 L0 9 L4.7 9 Z" fill="#000"/></svg></div>
<svg class="a" style="left:1355px;top:320px" width="11" height="11"><path d="M2.5 3.5 L7.5 3.5 L7.5 8.5 L3 8.5" stroke="#111" stroke-width="2.6" fill="none" opacity=".6"/><path d="M2.5 3.5 L7.5 3.5 L7.5 8.5 L3 8.5" stroke="#f0f020" stroke-width="1.4" fill="none"/><path d="M0.5 3.5 L3.5 1 L3.5 6 Z" fill="#f0f020"/></svg>
<div class="a" style="left:1090px;top:343.5px;white-space:nowrap;font-size:12.2px;color:#d4d4d4;line-height:14px;transform:scaleX(.93);transform-origin:0 0">Debug Draw Duration</div>
<div class="a" style="left:1241px;top:342px;width:109px;height:17px;background:#d8d8d8;border-radius:3px"><div style="position:absolute;left:6px;top:1px;font-size:12.4px;line-height:15px;color:#222">0.2</div><svg style="position:absolute;left:95px;top:3px" width="11" height="11"><path d="M3.3 1.2 L7.9 1.2 L7.9 5.8 Z M0 4 L0 9 L4.7 9 Z" fill="#000"/></svg></div>
<svg class="a" style="left:1355px;top:344px" width="11" height="11"><path d="M2.5 3.5 L7.5 3.5 L7.5 8.5 L3 8.5" stroke="#111" stroke-width="2.6" fill="none" opacity=".6"/><path d="M2.5 3.5 L7.5 3.5 L7.5 8.5 L3 8.5" stroke="#f0f020" stroke-width="1.4" fill="none"/><path d="M0.5 3.5 L3.5 1 L3.5 6 Z" fill="#f0f020"/></svg>
<div class="a" style="left:1090px;top:367.5px;white-space:nowrap;font-size:12.2px;color:#d4d4d4;line-height:14px;transform:scaleX(.93);transform-origin:0 0">Bone Name</div>
<div class="a" style="left:1241px;top:366px;width:109px;height:17px;background:#d8d8d8;border-radius:3px"><div style="position:absolute;left:5px;top:1px;font-size:12.4px;line-height:15px;color:#151515">None</div></div>
<div class="a" style="left:1090px;top:391.5px;white-space:nowrap;font-size:12.2px;color:#d4d4d4;line-height:14px;transform:scaleX(.93);transform-origin:0 0">Is Off Hand</div>
<div class="a" style="left:1241.5px;top:391px;width:14px;height:14px;background:#a8a8a8;border-radius:2px"></div>
<div class="a" style="left:1090px;top:415.5px;white-space:nowrap;font-size:12.2px;color:#d4d4d4;line-height:14px;transform:scaleX(.93);transform-origin:0 0">Sweep Attack Group</div>
<div class="a" style="left:1241px;top:414px;width:109px;height:17px;background:#d8d8d8;border-radius:3px"><div style="position:absolute;left:6px;top:1px;font-size:12.4px;line-height:15px;color:#222">0</div><svg style="position:absolute;left:95px;top:3px" width="11" height="11"><path d="M3.3 1.2 L7.9 1.2 L7.9 5.8 Z M0 4 L0 9 L4.7 9 Z" fill="#000"/></svg></div>
<div class="a" style="left:1090px;top:439.5px;white-space:nowrap;font-size:12.2px;color:#d4d4d4;line-height:14px;transform:scaleX(.93);transform-origin:0 0">Clear Attack Groups</div>
<div class="a" style="left:1241.5px;top:439px;width:14px;height:14px;background:#a8a8a8;border-radius:2px"><svg width="14" height="14"><path d="M3 7.5 L6 10.5 L11.5 3.5" stroke="#6a6a6a" stroke-width="2.2" fill="none"/></svg></div>
<svg class="a" style="left:1076px;top:465px" width="10" height="12"><path d="M1.5 1.5 L7 5.5 L1.5 9.5 Z" stroke="#c0c0c0" stroke-width="1" fill="none"/></svg>
<div class="a" style="left:1090px;top:465px;white-space:nowrap;font-size:12.2px;color:#d4d4d4;line-height:14px;transform:scaleX(.93);transform-origin:0 0">Damage Multipliers</div>
<div class="a" style="left:1241px;top:465px;white-space:nowrap;font-size:12.2px;color:#d4d4d4;line-height:14px;transform:scaleX(.95);transform-origin:0 0">1 Array elements</div>
<svg class="a" style="left:1356px;top:466px" width="13" height="13"><path d="M6.5 1 L6.5 12 M1 6.5 L12 6.5" stroke="#d8d8d8" stroke-width="2.6"/></svg>
<svg class="a" style="left:1381px;top:466px" width="11" height="13"><path d="M1 2.5 L10 2.5 M4 1 L7 1" stroke="#c8c8c8" stroke-width="1.4"/><path d="M2 4 L9 4 L8.4 12 L2.6 12 Z" fill="none" stroke="#c8c8c8" stroke-width="1.3"/><path d="M4.3 5.5 L4.3 10.5 M6.7 5.5 L6.7 10.5" stroke="#c8c8c8" stroke-width="1"/></svg>
<svg class="a" style="left:1399px;top:466px" width="11" height="11"><path d="M2.5 3.5 L7.5 3.5 L7.5 8.5 L3 8.5" stroke="#111" stroke-width="2.6" fill="none" opacity=".6"/><path d="M2.5 3.5 L7.5 3.5 L7.5 8.5 L3 8.5" stroke="#f0f020" stroke-width="1.4" fill="none"/><path d="M0.5 3.5 L3.5 1 L3.5 6 Z" fill="#f0f020"/></svg>
<div class="a" style="left:1090px;top:493px;white-space:nowrap;font-size:12.2px;color:#d4d4d4;line-height:14px;transform:scaleX(.93);transform-origin:0 0">Knock Back Class</div><div class="a" style="left:1242px;top:491px;width:44px;height:19px;background:linear-gradient(#efefef,#b2b2b2);border:1px solid #1e1e1e;border-radius:2px"><div style="position:absolute;left:4px;top:1.0px;font-size:12.6px;line-height:15px;color:#151515;transform:scaleX(0.82);transform-origin:0 0;white-space:nowrap">None</div><svg style="position:absolute;left:28px;top:5.5px" width="12" height="8"><path d="M1 1 L10 1 L5.5 6 Z" fill="#111"/></svg></div><svg class="a" style="left:1296px;top:494.5px" width="14" height="13"><path d="M1 6.5 L7 1 L7 4 L13 4 L13 9 L7 9 L7 12 Z" fill="#d0d0d0"/></svg><svg class="a" style="left:1320px;top:494.5px" width="14" height="14"><circle cx="8" cy="5.5" r="4" stroke="#c8c8c8" stroke-width="1.6" fill="none"/><path d="M5 8.5 L1.5 12" stroke="#c8c8c8" stroke-width="2"/></svg><svg class="a" style="left:1345px;top:494.5px" width="13" height="13"><path d="M6.5 1 L6.5 12 M1 6.5 L12 6.5" stroke="#d8d8d8" stroke-width="2.6"/></svg><svg class="a" style="left:1369px;top:494.5px" width="13" height="13"><path d="M2 2 L11 11 M11 2 L2 11" stroke="#d8d8d8" stroke-width="2.8"/></svg>
<div class="a" style="left:1090px;top:521.4px;white-space:nowrap;font-size:12.2px;color:#d4d4d4;line-height:14px;transform:scaleX(.93);transform-origin:0 0">Combo Effects</div>
<div class="a" style="left:1241px;top:521px;white-space:nowrap;font-size:12.2px;color:#d4d4d4;line-height:14px;transform:scaleX(.95);transform-origin:0 0">0 Array elements</div>
<svg class="a" style="left:1356px;top:522px" width="13" height="13"><path d="M6.5 1 L6.5 12 M1 6.5 L12 6.5" stroke="#d8d8d8" stroke-width="2.6"/></svg>
<svg class="a" style="left:1381px;top:522px" width="11" height="13"><path d="M1 2.5 L10 2.5 M4 1 L7 1" stroke="#c8c8c8" stroke-width="1.4"/><path d="M2 4 L9 4 L8.4 12 L2.6 12 Z" fill="none" stroke="#c8c8c8" stroke-width="1.3"/><path d="M4.3 5.5 L4.3 10.5 M6.7 5.5 L6.7 10.5" stroke="#c8c8c8" stroke-width="1"/></svg>
<div class="a" style="left:1074px;top:547px;width:161px;height:20px;overflow:hidden"><div class="a"  style="left:16px;top:2.7999999999999545px;white-space:nowrap;font-size:12.2px;color:#d4d4d4;line-height:14px;transform:scaleX(.93);transform-origin:0 0">Blocker Hit Confirm Knockback Class</div></div>
<div class="a" style="left:1242px;top:547px;width:44px;height:19px;background:linear-gradient(#efefef,#b2b2b2);border:1px solid #1e1e1e;border-radius:2px"><div style="position:absolute;left:4px;top:1.0px;font-size:12.6px;line-height:15px;color:#151515;transform:scaleX(0.82);transform-origin:0 0;white-space:nowrap">None</div><svg style="position:absolute;left:28px;top:5.5px" width="12" height="8"><path d="M1 1 L10 1 L5.5 6 Z" fill="#111"/></svg></div><svg class="a" style="left:1296px;top:550.5px" width="14" height="13"><path d="M1 6.5 L7 1 L7 4 L13 4 L13 9 L7 9 L7 12 Z" fill="#d0d0d0"/></svg><svg class="a" style="left:1320px;top:550.5px" width="14" height="14"><circle cx="8" cy="5.5" r="4" stroke="#c8c8c8" stroke-width="1.6" fill="none"/><path d="M5 8.5 L1.5 12" stroke="#c8c8c8" stroke-width="2"/></svg><svg class="a" style="left:1345px;top:550.5px" width="13" height="13"><path d="M6.5 1 L6.5 12 M1 6.5 L12 6.5" stroke="#d8d8d8" stroke-width="2.6"/></svg><svg class="a" style="left:1369px;top:550.5px" width="13" height="13"><path d="M2 2 L11 11 M11 2 L2 11" stroke="#d8d8d8" stroke-width="2.8"/></svg>
<div class="a" style="left:1074px;top:575px;width:161px;height:20px;overflow:hidden"><div class="a" style="left:16px;top:3px;white-space:nowrap;font-size:12.2px;color:#d4d4d4;line-height:14px;transform:scaleX(.93);transform-origin:0 0">Block Rebound Knockback Class</div></div>
<div class="a" style="left:1242px;top:575px;width:44px;height:19px;background:linear-gradient(#efefef,#b2b2b2);border:1px solid #1e1e1e;border-radius:2px"><div style="position:absolute;left:4px;top:1.0px;font-size:12.6px;line-height:15px;color:#151515;transform:scaleX(0.82);transform-origin:0 0;white-space:nowrap">None</div><svg style="position:absolute;left:28px;top:5.5px" width="12" height="8"><path d="M1 1 L10 1 L5.5 6 Z" fill="#111"/></svg></div><svg class="a" style="left:1296px;top:578.5px" width="14" height="13"><path d="M1 6.5 L7 1 L7 4 L13 4 L13 9 L7 9 L7 12 Z" fill="#d0d0d0"/></svg><svg class="a" style="left:1320px;top:578.5px" width="14" height="14"><circle cx="8" cy="5.5" r="4" stroke="#c8c8c8" stroke-width="1.6" fill="none"/><path d="M5 8.5 L1.5 12" stroke="#c8c8c8" stroke-width="2"/></svg><svg class="a" style="left:1345px;top:578.5px" width="13" height="13"><path d="M6.5 1 L6.5 12 M1 6.5 L12 6.5" stroke="#d8d8d8" stroke-width="2.6"/></svg><svg class="a" style="left:1369px;top:578.5px" width="13" height="13"><path d="M2 2 L11 11 M11 2 L2 11" stroke="#d8d8d8" stroke-width="2.8"/></svg>
<div class="a" style="left:1074px;top:603px;width:161px;height:20px;overflow:hidden"><div class="a" style="left:16px;top:2.5px;white-space:nowrap;font-size:12.2px;color:#d4d4d4;line-height:14px;transform:scaleX(.93);transform-origin:0 0">Shield Break Knockback Class</div></div>
<div class="a" style="left:1242px;top:603px;width:44px;height:19px;background:linear-gradient(#efefef,#b2b2b2);border:1px solid #1e1e1e;border-radius:2px"><div style="position:absolute;left:4px;top:1.0px;font-size:12.6px;line-height:15px;color:#151515;transform:scaleX(0.82);transform-origin:0 0;white-space:nowrap">None</div><svg style="position:absolute;left:28px;top:5.5px" width="12" height="8"><path d="M1 1 L10 1 L5.5 6 Z" fill="#111"/></svg></div><svg class="a" style="left:1296px;top:606.5px" width="14" height="13"><path d="M1 6.5 L7 1 L7 4 L13 4 L13 9 L7 9 L7 12 Z" fill="#d0d0d0"/></svg><svg class="a" style="left:1320px;top:606.5px" width="14" height="14"><circle cx="8" cy="5.5" r="4" stroke="#c8c8c8" stroke-width="1.6" fill="none"/><path d="M5 8.5 L1.5 12" stroke="#c8c8c8" stroke-width="2"/></svg><svg class="a" style="left:1345px;top:606.5px" width="13" height="13"><path d="M6.5 1 L6.5 12 M1 6.5 L12 6.5" stroke="#d8d8d8" stroke-width="2.6"/></svg><svg class="a" style="left:1369px;top:606.5px" width="13" height="13"><path d="M2 2 L11 11 M11 2 L2 11" stroke="#d8d8d8" stroke-width="2.8"/></svg>
<svg class="a" style="left:1076px;top:631.6px" width="10" height="12"><path d="M1.5 1.5 L7 5.5 L1.5 9.5 Z" stroke="#c0c0c0" stroke-width="1" fill="none"/></svg>
<div class="a" style="left:1090px;top:631.6px;white-space:nowrap;font-size:12.2px;color:#d4d4d4;line-height:14px;transform:scaleX(.93);transform-origin:0 0">Notify Color</div>
<div class="a" style="left:1241px;top:632px;width:238px;height:12px;background:#fde2e2"></div>
<div class="a" style="left:1090px;top:681.8px;white-space:nowrap;font-size:12.2px;color:#d4d4d4;line-height:14px;transform:scaleX(.93);transform-origin:0 0">Notify Trigger Chance</div>
<div class="a" style="left:1241px;top:680px;width:108px;height:17px;background:#d8d8d8;border-radius:3px"><div style="position:absolute;left:6px;top:1px;font-size:12.4px;line-height:15px;color:#222">1.0</div><svg style="position:absolute;left:94px;top:3px" width="11" height="11"><path d="M3.3 1.2 L7.9 1.2 L7.9 5.8 Z M0 4 L0 9 L4.7 9 Z" fill="#000"/></svg></div>
<div class="a" style="left:1090px;top:705.3px;white-space:nowrap;font-size:12.2px;color:#d4d4d4;line-height:14px;transform:scaleX(.93);transform-origin:0 0">Trigger on Dedicated Server</div>
<div class="a" style="left:1241.5px;top:703px;width:14px;height:14px;background:#a8a8a8;border-radius:2px"><svg width="14" height="14"><path d="M3 7.5 L6 10.5 L11.5 3.5" stroke="#6a6a6a" stroke-width="2.2" fill="none"/></svg></div>
<svg class="a" style="left:1262px;top:706px" width="11" height="11"><path d="M2.5 3.5 L7.5 3.5 L7.5 8.5 L3 8.5" stroke="#111" stroke-width="2.6" fill="none" opacity=".6"/><path d="M2.5 3.5 L7.5 3.5 L7.5 8.5 L3 8.5" stroke="#f0f020" stroke-width="1.4" fill="none"/><path d="M0.5 3.5 L3.5 1 L3.5 6 Z" fill="#f0f020"/></svg>
<div class="a" style="left:1090px;top:730.3px;white-space:nowrap;font-size:12.2px;color:#d4d4d4;line-height:14px;transform:scaleX(.93);transform-origin:0 0">Notify Filter Type</div>
<div class="a" style="left:1241px;top:727px;width:108px;height:20px;background:linear-gradient(#efefef,#b2b2b2);border:1px solid #1e1e1e;border-radius:2px"><div style="position:absolute;left:4px;top:1.5px;font-size:12.4px;line-height:15px;color:#151515;transform:scaleX(0.95);transform-origin:0 0;white-space:nowrap">No Filtering</div><svg style="position:absolute;left:90px;top:6.0px" width="12" height="8"><path d="M1 1 L11 1 L6 6 Z" fill="#111"/></svg></div>
<svg class="a" style="left:1076px;top:782.6px" width="10" height="10"><path d="M1 9 L8 9 L8 2 Z" fill="#c0c0c0"/></svg>
<div class="a" style="left:1090px;top:781.6px;white-space:nowrap;font-size:12.2px;color:#d4d4d4;line-height:14px;transform:scaleX(.93);transform-origin:0 0">Event</div>
<div class="a" style="left:1100px;top:805.6px;white-space:nowrap;font-size:12.2px;color:#d4d4d4;line-height:14px;transform:scaleX(.93);transform-origin:0 0">Trigger Weight Threshold</div>
<div class="a" style="left:1241px;top:804px;width:109px;height:17px;background:#d8d8d8;border-radius:3px"><div style="position:absolute;left:6px;top:1px;font-size:12.4px;line-height:15px;color:#222">0.00001</div><svg style="position:absolute;left:95px;top:3px" width="11" height="11"><path d="M3.3 1.2 L7.9 1.2 L7.9 5.8 Z M0 4 L0 9 L4.7 9 Z" fill="#000"/></svg></div>
<div class="a" style="left:1100px;top:830.3px;white-space:nowrap;font-size:12.2px;color:#d4d4d4;line-height:14px;transform:scaleX(.93);transform-origin:0 0">Montage Tick Type</div>
<div class="a" style="left:1241px;top:827px;width:108px;height:20px;background:linear-gradient(#efefef,#b2b2b2);border:1px solid #1e1e1e;border-radius:2px"><div style="position:absolute;left:4px;top:1.5px;font-size:12.4px;line-height:15px;color:#151515;transform:scaleX(0.95);transform-origin:0 0;white-space:nowrap">Branching Point</div><svg style="position:absolute;left:90px;top:6.0px" width="12" height="8"><path d="M1 1 L11 1 L6 6 Z" fill="#111"/></svg></div>
<svg class="a" style="left:1355px;top:833px" width="11" height="11"><path d="M2.5 3.5 L7.5 3.5 L7.5 8.5 L3 8.5" stroke="#111" stroke-width="2.6" fill="none" opacity=".6"/><path d="M2.5 3.5 L7.5 3.5 L7.5 8.5 L3 8.5" stroke="#f0f020" stroke-width="1.4" fill="none"/><path d="M0.5 3.5 L3.5 1 L3.5 6 Z" fill="#f0f020"/></svg>
<div class="a" style="left:1090px;top:882px;white-space:nowrap;font-size:12.2px;color:#d4d4d4;line-height:14px;transform:scaleX(.93);transform-origin:0 0">Slot</div>
<div class="a" style="left:1241px;top:880px;width:112px;height:20px;background:linear-gradient(#efefef,#b2b2b2);border:1px solid #1e1e1e;border-radius:2px"><div style="position:absolute;left:4px;top:1.5px;font-size:13px;line-height:15px;color:#151515;transform:scaleX(0.95);transform-origin:0 0;white-space:nowrap">AttackMontage</div><svg style="position:absolute;left:94px;top:6.0px" width="12" height="8"><path d="M1 1 L11 1 L6 6 Z" fill="#111"/></svg></div>
<div class="a" style="left:1544px;top:59px;width:10px;height:759px;background:#d0d0d0;border:1px solid #2e2e2e;border-radius:2px"></div>
<div class="a" style="left:1548px;top:52px;width:1px;height:8px;background:#666"></div>
<div class="a" style="left:1076px;top:908px;width:150px;height:19px;background:#5e5e5e;border-radius:3px 3px 0 0"></div>
<svg class="a" style="left:1080px;top:911px" width="18" height="16"><path d="M3 1 L16 1 L15 14 L1 15 Z" fill="#4a78d8"/><g fill="#e8eeff"><rect x="4" y="3" width="3" height="2.5"/><rect x="8" y="3" width="3" height="2.5"/><rect x="12" y="3" width="2.5" height="2.5"/><rect x="4" y="7" width="3" height="2.5"/><rect x="8" y="7" width="3" height="2.5"/><rect x="12" y="7" width="2.5" height="2.5"/><rect x="4" y="11" width="3" height="2"/><rect x="8" y="11" width="3" height="2"/></g></svg>
<div class="a" style="left:1102px;top:911px;white-space:nowrap;font-size:13px;color:#e2e2e2;line-height:15px;text-shadow:1px 1px 1px #111;transform:scaleX(.95);transform-origin:0 0">Asset Browser</div>
<svg class="a" style="left:1208px;top:913px" width="12" height="12"><path d="M2 2 L10 10 M10 2 L2 10" stroke="#8a8a8a" stroke-width="1.2"/></svg>
<svg class="a" style="left:0;top:0" width="1560" height="927"><path d="M1266 46.7 C1230 48 1190 45 1118 40.5 C1095 42 1080 47 1074 56 C1068 70 1066 85 1065.5 100 L1064.5 179 L1061 268 L1056.7 374.7 L1057 467.7 L1057 566.8 L1055.9 713.6 L1054.6 754.6 C1058 762 1064 766 1069 763 C1064 770 1059 778 1058 790 L1057 801 L1058.3 820.9 C1090 819 1110 817 1137 817.5 C1186 819 1230 822 1283.6 826.5 C1350 832 1420 834 1497 827.9 C1520 822 1535 817 1540 815.4 L1546.8 812.3 C1550 790 1552 770 1551.5 761.8 C1554 720 1555.5 680 1555.3 645.3 C1555 600 1553.4 580 1553.4 567.7 C1551 530 1548 515 1545.4 500.4 C1538 470 1530 430 1528.3 401.6 C1525 370 1524 345 1524 326.8 C1525 280 1527 250 1528.3 227 C1530 200 1532 185 1533 155.6 C1535 130 1535 120 1534.9 110.8 C1534 95 1530 85 1520.5 79.4 C1505 74 1470 67 1441.5 62.3 C1400 55 1370 50 1351.8 48.8 C1320 46 1300 44.5 1280 43.5 C1230 42 1170 40.5 1118 40.3" stroke="#ff0000" stroke-width="2" fill="none" stroke-linecap="round" stroke-linejoin="round"/><path d="M1007.9 472.4 C1020 471.5 1030 471 1035.3 470.5 C1045 469.5 1052 468.5 1058.8 467.5 C1050 476 1048 482 1042.9 491.3 C1038 497 1034 502 1032.3 506.4 C1030 510 1029 514 1028.5 517.7" stroke="#ff0000" stroke-width="2" fill="none" stroke-linecap="round" stroke-linejoin="round"/><path d="M573 728 C590 712 600 700 615.6 685.6 C630 670 645 655 658 643 C675 628 690 615 707 603.8 C725 592 745 578 762.7 567.9 C780 557 800 547 821.5 538.5 C845 529 865 522 887 515.6 C910 509 930 502 952.3 497.6 C975 493 995 489 1012 485.5 C1022 483 1029 480.5 1035 478" stroke="#ff0000" stroke-width="2" fill="none" stroke-linecap="round" stroke-linejoin="round"/><path d="M459 733 C430 726 400 722 391 723 C380 730 384 752 400 762 C430 780 520 790 600 789 C630 788 642 770 638 760 C630 740 600 728 560 722 C500 714 420 716 395 732 C382 745 392 762 420 770 C470 781 560 782 612 770 C640 762 640 750 630 742 C600 728 540 723 470 722 C420 722 392 735 394 748 C398 760 430 768 470 772 C520 776 580 776 625 765" stroke="#ff0000" stroke-width="2" fill="none" stroke-linecap="round" stroke-linejoin="round"/></svg>
</body></html>
